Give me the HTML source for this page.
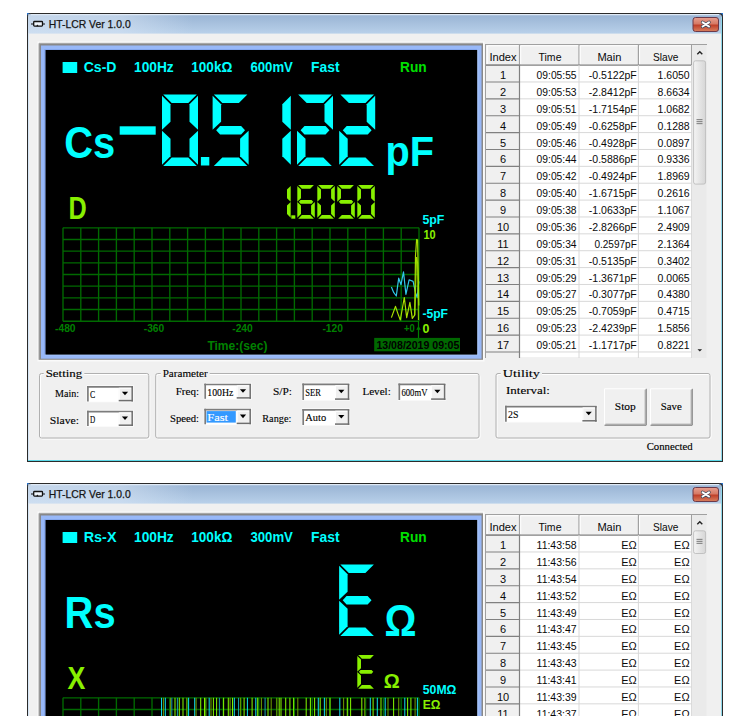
<!DOCTYPE html><html><head><meta charset="utf-8"><style>html,body{margin:0;padding:0;background:#fff;overflow:hidden}svg{display:block}</style></head><body>
<svg width="750" height="716" viewBox="0 0 750 716">
<defs><linearGradient id="tgrad" x1="0" y1="0" x2="0" y2="1"><stop offset="0" stop-color="#98b3d3"/><stop offset="1" stop-color="#b9d1ea"/></linearGradient><linearGradient id="cgrad" x1="0" y1="0" x2="0" y2="1"><stop offset="0" stop-color="#e8a090"/><stop offset="0.45" stop-color="#d67a66"/><stop offset="0.55" stop-color="#c0402a"/><stop offset="1" stop-color="#d88060"/></linearGradient><linearGradient id="thgrad" x1="0" y1="0" x2="1" y2="0"><stop offset="0" stop-color="#f4f4f4"/><stop offset="1" stop-color="#d6d6d6"/></linearGradient><linearGradient id="glow" x1="0" y1="0" x2="1" y2="0"><stop offset="0" stop-color="#d6e4f4" stop-opacity="0.7"/><stop offset="0.55" stop-color="#d6e4f4" stop-opacity="0.6"/><stop offset="1" stop-color="#d6e4f4" stop-opacity="0"/></linearGradient></defs>
<rect width="750" height="716" fill="#fff"/>
<g transform="translate(0,13)">
<rect x="27" y="0" width="3" height="3" fill="#2a78d8" />
<rect x="720" y="0" width="3" height="3" fill="#2a78d8" />
<path d="M27,449 V4 Q27,0 31,0 H719 Q723,0 723,4 V449 Z" fill="#2b2b2b"/>
<path d="M28,21 V4.5 Q28,1 31.5,1 H718.5 Q722,1 722,4.5 V21 Z" fill="url(#tgrad)"/>
<rect x="28" y="1" width="165" height="20" fill="url(#glow)" />
<line x1="31" y1="1.6" x2="719" y2="1.6" stroke="#dfe9f5" stroke-width="1.2" />
<rect x="28" y="20.6" width="694" height="427.4" fill="#f0f0f0" />
<line x1="28.5" y1="20.6" x2="28.5" y2="448" stroke="#d6e6f6" stroke-width="1" />
<line x1="721.5" y1="4" x2="721.5" y2="448" stroke="#8fd8ea" stroke-width="1" />
<line x1="28" y1="447.5" x2="722" y2="447.5" stroke="#5ad8e8" stroke-width="1" />
<rect x="33.7" y="8.5" width="8.8" height="4.6" rx="0.8" fill="#eef4fb" stroke="#111" stroke-width="1.3"/>
<path d="M31,11 H33.7 M42.5,11 H45" stroke="#111" stroke-width="1.2"/>
<path d="M36.2,13.2 L37.3,11.6 L38.6,13.2 Z" fill="#111"/>
<text x="48.7" y="15.1" font-family='"Liberation Sans", sans-serif' font-size="10.5" font-weight="normal" fill="#141414" text-anchor="start" textLength="82" lengthAdjust="spacingAndGlyphs" stroke="#141414" stroke-width="0.25">HT-LCR Ver 1.0.0</text>
<rect x="693" y="4.5" width="25.5" height="14" rx="2.5" fill="url(#cgrad)" stroke="#6b3a4a" stroke-width="1"/>
<path d="M702.6,9.3 L709,13.5 M709,9.3 L702.6,13.5" stroke="#3e4a5a" stroke-width="3.4" stroke-linecap="round"/>
<path d="M702.6,9.3 L709,13.5 M709,9.3 L702.6,13.5" stroke="#fff" stroke-width="2" stroke-linecap="round"/>
<rect x="37.5" y="28.5" width="447" height="320" fill="#fafafa" />
<rect x="39" y="30.3" width="444" height="316.5" fill="#888888" />
<path d="M39,346.8 V30.3 H483" fill="none" stroke="#a8a8a8" stroke-width="1"/>
<rect x="41" y="32.5" width="440.5" height="313.2" fill="#98b8f8" />
<path d="M44.5,341.5 V36.5 H477" fill="none" stroke="#86a8ee" stroke-width="1"/>
<path d="M45,341.7 H477.7 V37" fill="none" stroke="#b0ceff" stroke-width="1.2"/>
<rect x="45.5" y="37" width="431.7" height="304.6" fill="#000" />
<rect x="62.6" y="49" width="14.6" height="11" fill="#00ffff" />
<text x="83.7" y="58.8" font-family='"Liberation Sans", sans-serif' font-size="14" font-weight="bold" fill="#00ffff" text-anchor="start" textLength="32.8" lengthAdjust="spacingAndGlyphs" >Cs-D</text>
<text x="134" y="58.8" font-family='"Liberation Sans", sans-serif' font-size="14" font-weight="bold" fill="#00ffff" text-anchor="start" textLength="39.7" lengthAdjust="spacingAndGlyphs" >100Hz</text>
<text x="191.3" y="58.8" font-family='"Liberation Sans", sans-serif' font-size="14" font-weight="bold" fill="#00ffff" text-anchor="start" textLength="41" lengthAdjust="spacingAndGlyphs" >100kΩ</text>
<text x="250.4" y="58.8" font-family='"Liberation Sans", sans-serif' font-size="14" font-weight="bold" fill="#00ffff" text-anchor="start" textLength="42.5" lengthAdjust="spacingAndGlyphs" >600mV</text>
<text x="311" y="58.8" font-family='"Liberation Sans", sans-serif' font-size="14" font-weight="bold" fill="#00ffff" text-anchor="start" textLength="28.5" lengthAdjust="spacingAndGlyphs" >Fast</text>
<text x="400" y="58.8" font-family='"Liberation Sans", sans-serif' font-size="14" font-weight="bold" fill="#00e000" text-anchor="start" textLength="26.6" lengthAdjust="spacingAndGlyphs" >Run</text>
<text x="64.3" y="144.6" font-family='"Liberation Sans", sans-serif' font-size="43.5" font-weight="bold" fill="#00ffff" text-anchor="start" textLength="51" lengthAdjust="spacingAndGlyphs" >Cs</text>
<rect x="119.7" y="113.3" width="36" height="8.4" fill="#00ffff" />
<polygon points="163.20,81.50 196.80,81.50 188.30,90.00 171.70,90.00" fill="#00ffff"/>
<polygon points="198.00,82.70 198.00,116.74 189.50,108.75 189.50,91.20" fill="#00ffff"/>
<polygon points="198.00,117.76 198.00,151.80 189.50,143.30 189.50,125.75" fill="#00ffff"/>
<polygon points="163.20,153.00 196.80,153.00 188.30,144.50 171.70,144.50" fill="#00ffff"/>
<polygon points="162.00,117.76 170.50,125.75 170.50,143.30 162.00,151.80" fill="#00ffff"/>
<polygon points="162.00,82.70 170.50,91.20 170.50,108.75 162.00,116.74" fill="#00ffff"/>
<rect x="200.9" y="144" width="8.4" height="8.5" fill="#00ffff" />
<polygon points="213.80,81.50 247.40,81.50 238.90,90.00 222.30,90.00" fill="#00ffff"/>
<polygon points="212.60,82.70 221.10,91.20 221.10,108.75 212.60,116.74" fill="#00ffff"/>
<polygon points="216.17,117.25 220.08,113.00 241.12,113.00 245.03,117.25 241.12,121.50 220.08,121.50" fill="#00ffff"/>
<polygon points="248.60,117.76 248.60,151.80 240.10,143.30 240.10,125.75" fill="#00ffff"/>
<polygon points="213.80,153.00 247.40,153.00 238.90,144.50 222.30,144.50" fill="#00ffff"/>
<polygon points="290.80,82.70 290.80,116.74 282.30,108.75 282.30,91.20" fill="#00ffff"/>
<polygon points="290.80,117.76 290.80,151.80 282.30,143.30 282.30,125.75" fill="#00ffff"/>
<polygon points="298.20,81.50 331.80,81.50 323.30,90.00 306.70,90.00" fill="#00ffff"/>
<polygon points="333.00,82.70 333.00,116.74 324.50,108.75 324.50,91.20" fill="#00ffff"/>
<polygon points="300.57,117.25 304.48,113.00 325.52,113.00 329.43,117.25 325.52,121.50 304.48,121.50" fill="#00ffff"/>
<polygon points="297.00,117.76 305.50,125.75 305.50,143.30 297.00,151.80" fill="#00ffff"/>
<polygon points="298.20,153.00 331.80,153.00 323.30,144.50 306.70,144.50" fill="#00ffff"/>
<polygon points="340.40,81.50 374.00,81.50 365.50,90.00 348.90,90.00" fill="#00ffff"/>
<polygon points="375.20,82.70 375.20,116.74 366.70,108.75 366.70,91.20" fill="#00ffff"/>
<polygon points="342.77,117.25 346.68,113.00 367.72,113.00 371.63,117.25 367.72,121.50 346.68,121.50" fill="#00ffff"/>
<polygon points="339.20,117.76 347.70,125.75 347.70,143.30 339.20,151.80" fill="#00ffff"/>
<polygon points="340.40,153.00 374.00,153.00 365.50,144.50 348.90,144.50" fill="#00ffff"/>
<text x="385.5" y="153.4" font-family='"Liberation Sans", sans-serif' font-size="43" font-weight="bold" fill="#00ffff" text-anchor="start" textLength="48.5" lengthAdjust="spacingAndGlyphs" >pF</text>
<text x="68.5" y="205.8" font-family='"Liberation Sans", sans-serif' font-size="30.5" font-weight="bold" fill="#88f000" text-anchor="start" textLength="18.2" lengthAdjust="spacingAndGlyphs" >D</text>
<polygon points="290.70,172.90 290.70,188.63 287.00,185.15 287.00,176.60" fill="#88f000"/>
<polygon points="290.70,189.07 290.70,204.80 287.00,201.10 287.00,192.55" fill="#88f000"/>
<rect x="291.3" y="202.3" width="4" height="3.4" fill="#88f000" />
<polygon points="298.20,172.00 313.90,172.00 310.20,175.70 301.90,175.70" fill="#88f000"/>
<polygon points="297.30,172.90 301.00,176.60 301.00,185.15 297.30,188.63" fill="#88f000"/>
<polygon points="298.85,188.85 300.56,187.00 311.54,187.00 313.25,188.85 311.54,190.70 300.56,190.70" fill="#88f000"/>
<polygon points="297.30,189.07 301.00,192.55 301.00,201.10 297.30,204.80" fill="#88f000"/>
<polygon points="298.20,205.70 313.90,205.70 310.20,202.00 301.90,202.00" fill="#88f000"/>
<polygon points="314.80,189.07 314.80,204.80 311.10,201.10 311.10,192.55" fill="#88f000"/>
<polygon points="318.20,172.00 333.90,172.00 330.20,175.70 321.90,175.70" fill="#88f000"/>
<polygon points="334.80,172.90 334.80,188.63 331.10,185.15 331.10,176.60" fill="#88f000"/>
<polygon points="334.80,189.07 334.80,204.80 331.10,201.10 331.10,192.55" fill="#88f000"/>
<polygon points="318.20,205.70 333.90,205.70 330.20,202.00 321.90,202.00" fill="#88f000"/>
<polygon points="317.30,189.07 321.00,192.55 321.00,201.10 317.30,204.80" fill="#88f000"/>
<polygon points="317.30,172.90 321.00,176.60 321.00,185.15 317.30,188.63" fill="#88f000"/>
<polygon points="338.20,172.00 353.90,172.00 350.20,175.70 341.90,175.70" fill="#88f000"/>
<polygon points="337.30,172.90 341.00,176.60 341.00,185.15 337.30,188.63" fill="#88f000"/>
<polygon points="338.85,188.85 340.56,187.00 351.54,187.00 353.25,188.85 351.54,190.70 340.56,190.70" fill="#88f000"/>
<polygon points="354.80,189.07 354.80,204.80 351.10,201.10 351.10,192.55" fill="#88f000"/>
<polygon points="338.20,205.70 353.90,205.70 350.20,202.00 341.90,202.00" fill="#88f000"/>
<polygon points="358.20,172.00 373.90,172.00 370.20,175.70 361.90,175.70" fill="#88f000"/>
<polygon points="374.80,172.90 374.80,188.63 371.10,185.15 371.10,176.60" fill="#88f000"/>
<polygon points="374.80,189.07 374.80,204.80 371.10,201.10 371.10,192.55" fill="#88f000"/>
<polygon points="358.20,205.70 373.90,205.70 370.20,202.00 361.90,202.00" fill="#88f000"/>
<polygon points="357.30,189.07 361.00,192.55 361.00,201.10 357.30,204.80" fill="#88f000"/>
<polygon points="357.30,172.90 361.00,176.60 361.00,185.15 357.30,188.63" fill="#88f000"/>
<text x="422.4" y="211" font-family='"Liberation Sans", sans-serif' font-size="12" font-weight="bold" fill="#00ffff" text-anchor="start" textLength="22" lengthAdjust="spacingAndGlyphs" >5pF</text>
<text x="423.4" y="226" font-family='"Liberation Sans", sans-serif' font-size="12" font-weight="bold" fill="#88f000" text-anchor="start" textLength="12.2" lengthAdjust="spacingAndGlyphs" >10</text>
<text x="422.4" y="305" font-family='"Liberation Sans", sans-serif' font-size="12" font-weight="bold" fill="#00ffff" text-anchor="start" textLength="25.6" lengthAdjust="spacingAndGlyphs" >-5pF</text>
<text x="422.4" y="320" font-family='"Liberation Sans", sans-serif' font-size="12" font-weight="bold" fill="#88f000" text-anchor="start" textLength="6.9" lengthAdjust="spacingAndGlyphs" >0</text>
<line x1="63.0" y1="214.8" x2="63.0" y2="308.2" stroke="#006a00" stroke-width="1.35" />
<line x1="80.8" y1="214.8" x2="80.8" y2="308.2" stroke="#006a00" stroke-width="1.35" />
<line x1="98.6" y1="214.8" x2="98.6" y2="308.2" stroke="#006a00" stroke-width="1.35" />
<line x1="116.4" y1="214.8" x2="116.4" y2="308.2" stroke="#006a00" stroke-width="1.35" />
<line x1="134.2" y1="214.8" x2="134.2" y2="308.2" stroke="#006a00" stroke-width="1.35" />
<line x1="152.0" y1="214.8" x2="152.0" y2="308.2" stroke="#006a00" stroke-width="1.35" />
<line x1="169.8" y1="214.8" x2="169.8" y2="308.2" stroke="#006a00" stroke-width="1.35" />
<line x1="187.6" y1="214.8" x2="187.6" y2="308.2" stroke="#006a00" stroke-width="1.35" />
<line x1="205.4" y1="214.8" x2="205.4" y2="308.2" stroke="#006a00" stroke-width="1.35" />
<line x1="223.2" y1="214.8" x2="223.2" y2="308.2" stroke="#006a00" stroke-width="1.35" />
<line x1="241.0" y1="214.8" x2="241.0" y2="308.2" stroke="#006a00" stroke-width="1.35" />
<line x1="258.8" y1="214.8" x2="258.8" y2="308.2" stroke="#006a00" stroke-width="1.35" />
<line x1="276.6" y1="214.8" x2="276.6" y2="308.2" stroke="#006a00" stroke-width="1.35" />
<line x1="294.4" y1="214.8" x2="294.4" y2="308.2" stroke="#006a00" stroke-width="1.35" />
<line x1="312.2" y1="214.8" x2="312.2" y2="308.2" stroke="#006a00" stroke-width="1.35" />
<line x1="330.0" y1="214.8" x2="330.0" y2="308.2" stroke="#006a00" stroke-width="1.35" />
<line x1="347.8" y1="214.8" x2="347.8" y2="308.2" stroke="#006a00" stroke-width="1.35" />
<line x1="365.6" y1="214.8" x2="365.6" y2="308.2" stroke="#006a00" stroke-width="1.35" />
<line x1="383.4" y1="214.8" x2="383.4" y2="308.2" stroke="#006a00" stroke-width="1.35" />
<line x1="401.2" y1="214.8" x2="401.2" y2="308.2" stroke="#006a00" stroke-width="1.35" />
<line x1="419.0" y1="214.8" x2="419.0" y2="308.2" stroke="#006a00" stroke-width="1.35" />
<line x1="63" y1="214.8" x2="419" y2="214.8" stroke="#006a00" stroke-width="1.35" />
<line x1="63" y1="226.47500000000002" x2="419" y2="226.47500000000002" stroke="#006a00" stroke-width="1.35" />
<line x1="63" y1="238.15" x2="419" y2="238.15" stroke="#006a00" stroke-width="1.35" />
<line x1="63" y1="249.825" x2="419" y2="249.825" stroke="#006a00" stroke-width="1.35" />
<line x1="63" y1="261.5" x2="419" y2="261.5" stroke="#006a00" stroke-width="1.35" />
<line x1="63" y1="273.175" x2="419" y2="273.175" stroke="#006a00" stroke-width="1.35" />
<line x1="63" y1="284.85" x2="419" y2="284.85" stroke="#006a00" stroke-width="1.35" />
<line x1="63" y1="296.525" x2="419" y2="296.525" stroke="#006a00" stroke-width="1.35" />
<line x1="63" y1="308.2" x2="419" y2="308.2" stroke="#006a00" stroke-width="1.35" />
<text x="65.3" y="318.9" font-family='"Liberation Sans", sans-serif' font-size="10.8" font-weight="bold" fill="#008000" text-anchor="middle" textLength="20.5" lengthAdjust="spacingAndGlyphs" >-480</text>
<text x="154" y="318.9" font-family='"Liberation Sans", sans-serif' font-size="10.8" font-weight="bold" fill="#008000" text-anchor="middle" textLength="20.5" lengthAdjust="spacingAndGlyphs" >-360</text>
<text x="242.5" y="318.9" font-family='"Liberation Sans", sans-serif' font-size="10.8" font-weight="bold" fill="#008000" text-anchor="middle" textLength="20.5" lengthAdjust="spacingAndGlyphs" >-240</text>
<text x="332.7" y="318.9" font-family='"Liberation Sans", sans-serif' font-size="10.8" font-weight="bold" fill="#008000" text-anchor="middle" textLength="20.5" lengthAdjust="spacingAndGlyphs" >-120</text>
<text x="207.4" y="336.5" font-family='"Liberation Sans", sans-serif' font-size="12.3" font-weight="bold" fill="#008000" text-anchor="start" textLength="60" lengthAdjust="spacingAndGlyphs" >Time:(sec)</text>
<polyline points="391.4,274 393.8,279.7 396.3,283 398.7,265.2 401,271.7 403.5,258.8 405.9,281.3 409.1,266.8 413.1,268.4 415.5,279.7 417.2,284.5 418.8,268.4" fill="none" stroke="#30c8e8" stroke-width="1.2" stroke-linejoin="round"/>
<polyline points="391.4,304.6 395.5,293.4 397.9,300.6 400.3,307 404.3,284.5 406.7,304.6 409.9,289.3 412.3,305.4 414.7,302.2 415.5,242.7 416.6,226.6 417.6,227 418.8,292.6" fill="none" stroke="#a8e000" stroke-width="1.2" stroke-linejoin="round"/>
<polyline points="414.8,302 416.6,244 417.6,250 418.4,307" fill="none" stroke="#a0e000" stroke-width="1" transform="translate(0,0)"/>
<line x1="418.5" y1="308" x2="418.5" y2="332" stroke="#008000" stroke-width="1.2" />
<path d="M416.3,316.8 L418.5,312.8 L420.7,316.8 Z" fill="#008000"/>
<text x="404" y="318.7" font-family='"Liberation Sans", sans-serif' font-size="10.8" font-weight="bold" fill="#008000" text-anchor="start" textLength="10.7" lengthAdjust="spacingAndGlyphs" >+0</text>
<rect x="374.2" y="324.9" width="85.8" height="13.4" fill="#006800" />
<text x="376.4" y="335.5" font-family='"Liberation Sans", sans-serif' font-size="11" font-weight="bold" fill="#000" text-anchor="start" textLength="83" lengthAdjust="spacingAndGlyphs" >13/08/2019  09:05</text>
<rect x="485" y="31" width="222" height="314" fill="#f0f0f0" />
<rect x="485" y="31" width="222" height="1" fill="#a0a0a0" />
<rect x="485" y="31" width="1" height="314" fill="#a0a0a0" />
<rect x="486" y="32" width="205.6" height="20" fill="#f0f0f0" />
<rect x="519.5" y="52.1" width="172.1" height="292" fill="#fff" />
<line x1="486" y1="52.1" x2="519.5" y2="52.1" stroke="#808080" stroke-width="1.2" />
<line x1="519.5" y1="52.1" x2="691.6" y2="52.1" stroke="#d8d8d8" stroke-width="1" />
<line x1="486" y1="68.975" x2="519.5" y2="68.975" stroke="#808080" stroke-width="1.2" />
<line x1="519.5" y1="68.975" x2="691.6" y2="68.975" stroke="#d8d8d8" stroke-width="1" />
<line x1="486" y1="85.85" x2="519.5" y2="85.85" stroke="#808080" stroke-width="1.2" />
<line x1="519.5" y1="85.85" x2="691.6" y2="85.85" stroke="#d8d8d8" stroke-width="1" />
<line x1="486" y1="102.725" x2="519.5" y2="102.725" stroke="#808080" stroke-width="1.2" />
<line x1="519.5" y1="102.725" x2="691.6" y2="102.725" stroke="#d8d8d8" stroke-width="1" />
<line x1="486" y1="119.6" x2="519.5" y2="119.6" stroke="#808080" stroke-width="1.2" />
<line x1="519.5" y1="119.6" x2="691.6" y2="119.6" stroke="#d8d8d8" stroke-width="1" />
<line x1="486" y1="136.475" x2="519.5" y2="136.475" stroke="#808080" stroke-width="1.2" />
<line x1="519.5" y1="136.475" x2="691.6" y2="136.475" stroke="#d8d8d8" stroke-width="1" />
<line x1="486" y1="153.35" x2="519.5" y2="153.35" stroke="#808080" stroke-width="1.2" />
<line x1="519.5" y1="153.35" x2="691.6" y2="153.35" stroke="#d8d8d8" stroke-width="1" />
<line x1="486" y1="170.225" x2="519.5" y2="170.225" stroke="#808080" stroke-width="1.2" />
<line x1="519.5" y1="170.225" x2="691.6" y2="170.225" stroke="#d8d8d8" stroke-width="1" />
<line x1="486" y1="187.1" x2="519.5" y2="187.1" stroke="#808080" stroke-width="1.2" />
<line x1="519.5" y1="187.1" x2="691.6" y2="187.1" stroke="#d8d8d8" stroke-width="1" />
<line x1="486" y1="203.975" x2="519.5" y2="203.975" stroke="#808080" stroke-width="1.2" />
<line x1="519.5" y1="203.975" x2="691.6" y2="203.975" stroke="#d8d8d8" stroke-width="1" />
<line x1="486" y1="220.85" x2="519.5" y2="220.85" stroke="#808080" stroke-width="1.2" />
<line x1="519.5" y1="220.85" x2="691.6" y2="220.85" stroke="#d8d8d8" stroke-width="1" />
<line x1="486" y1="237.725" x2="519.5" y2="237.725" stroke="#808080" stroke-width="1.2" />
<line x1="519.5" y1="237.725" x2="691.6" y2="237.725" stroke="#d8d8d8" stroke-width="1" />
<line x1="486" y1="254.6" x2="519.5" y2="254.6" stroke="#808080" stroke-width="1.2" />
<line x1="519.5" y1="254.6" x2="691.6" y2="254.6" stroke="#d8d8d8" stroke-width="1" />
<line x1="486" y1="271.475" x2="519.5" y2="271.475" stroke="#808080" stroke-width="1.2" />
<line x1="519.5" y1="271.475" x2="691.6" y2="271.475" stroke="#d8d8d8" stroke-width="1" />
<line x1="486" y1="288.35" x2="519.5" y2="288.35" stroke="#808080" stroke-width="1.2" />
<line x1="519.5" y1="288.35" x2="691.6" y2="288.35" stroke="#d8d8d8" stroke-width="1" />
<line x1="486" y1="305.225" x2="519.5" y2="305.225" stroke="#808080" stroke-width="1.2" />
<line x1="519.5" y1="305.225" x2="691.6" y2="305.225" stroke="#d8d8d8" stroke-width="1" />
<line x1="486" y1="322.1" x2="519.5" y2="322.1" stroke="#808080" stroke-width="1.2" />
<line x1="519.5" y1="322.1" x2="691.6" y2="322.1" stroke="#d8d8d8" stroke-width="1" />
<line x1="486" y1="338.975" x2="519.5" y2="338.975" stroke="#808080" stroke-width="1.2" />
<line x1="519.5" y1="338.975" x2="691.6" y2="338.975" stroke="#d8d8d8" stroke-width="1" />
<line x1="519.5" y1="32" x2="519.5" y2="52.1" stroke="#a0a0a0" stroke-width="1.2" />
<line x1="579" y1="32" x2="579" y2="52.1" stroke="#a0a0a0" stroke-width="1.2" />
<line x1="638.4" y1="32" x2="638.4" y2="52.1" stroke="#a0a0a0" stroke-width="1.2" />
<line x1="691.6" y1="32" x2="691.6" y2="52.1" stroke="#a0a0a0" stroke-width="1.2" />
<path d="M487.2,51 V32.8 H518.7" fill="none" stroke="#fff" stroke-width="1"/>
<path d="M520.7,51 V32.8 H578.2" fill="none" stroke="#fff" stroke-width="1"/>
<path d="M580.2,51 V32.8 H637.6" fill="none" stroke="#fff" stroke-width="1"/>
<path d="M639.6,51 V32.8 H690.8000000000001" fill="none" stroke="#fff" stroke-width="1"/>
<line x1="486" y1="52.1" x2="691.6" y2="52.1" stroke="#8a8a8a" stroke-width="1.3" />
<line x1="519.5" y1="52" x2="519.5" y2="345" stroke="#808080" stroke-width="1.2" />
<line x1="579" y1="52" x2="579" y2="345" stroke="#d8d8d8" stroke-width="1" />
<line x1="638.4" y1="52" x2="638.4" y2="345" stroke="#d8d8d8" stroke-width="1" />
<line x1="691.6" y1="52" x2="691.6" y2="345" stroke="#d8d8d8" stroke-width="1" />
<text x="503" y="48.2" font-family='"Liberation Sans", sans-serif' font-size="11" font-weight="normal" fill="#0a0a0a" text-anchor="middle" textLength="27.2" lengthAdjust="spacingAndGlyphs" >Index</text>
<text x="550" y="48.2" font-family='"Liberation Sans", sans-serif' font-size="11" font-weight="normal" fill="#0a0a0a" text-anchor="middle" textLength="23" lengthAdjust="spacingAndGlyphs" >Time</text>
<text x="609.4" y="48.2" font-family='"Liberation Sans", sans-serif' font-size="11" font-weight="normal" fill="#0a0a0a" text-anchor="middle" textLength="24" lengthAdjust="spacingAndGlyphs" >Main</text>
<text x="665.7" y="48.2" font-family='"Liberation Sans", sans-serif' font-size="11" font-weight="normal" fill="#0a0a0a" text-anchor="middle" textLength="25.4" lengthAdjust="spacingAndGlyphs" >Slave</text>
<text x="503" y="66.1" font-family='"Liberation Sans", sans-serif' font-size="11" font-weight="normal" fill="#0a0a0a" text-anchor="middle" >1</text>
<text x="576.6" y="66.1" font-family='"Liberation Sans", sans-serif' font-size="11" font-weight="normal" fill="#0a0a0a" text-anchor="end" textLength="40" lengthAdjust="spacingAndGlyphs" >09:05:55</text>
<text x="636.8" y="66.1" font-family='"Liberation Sans", sans-serif' font-size="11" font-weight="normal" fill="#0a0a0a" text-anchor="end" textLength="48" lengthAdjust="spacingAndGlyphs" >-0.5122pF</text>
<text x="689.6" y="66.1" font-family='"Liberation Sans", sans-serif' font-size="11" font-weight="normal" fill="#0a0a0a" text-anchor="end" textLength="32" lengthAdjust="spacingAndGlyphs" >1.6050</text>
<text x="503" y="82.975" font-family='"Liberation Sans", sans-serif' font-size="11" font-weight="normal" fill="#0a0a0a" text-anchor="middle" >2</text>
<text x="576.6" y="82.975" font-family='"Liberation Sans", sans-serif' font-size="11" font-weight="normal" fill="#0a0a0a" text-anchor="end" textLength="40" lengthAdjust="spacingAndGlyphs" >09:05:53</text>
<text x="636.8" y="82.975" font-family='"Liberation Sans", sans-serif' font-size="11" font-weight="normal" fill="#0a0a0a" text-anchor="end" textLength="48" lengthAdjust="spacingAndGlyphs" >-2.8412pF</text>
<text x="689.6" y="82.975" font-family='"Liberation Sans", sans-serif' font-size="11" font-weight="normal" fill="#0a0a0a" text-anchor="end" textLength="32" lengthAdjust="spacingAndGlyphs" >8.6634</text>
<text x="503" y="99.85" font-family='"Liberation Sans", sans-serif' font-size="11" font-weight="normal" fill="#0a0a0a" text-anchor="middle" >3</text>
<text x="576.6" y="99.85" font-family='"Liberation Sans", sans-serif' font-size="11" font-weight="normal" fill="#0a0a0a" text-anchor="end" textLength="40" lengthAdjust="spacingAndGlyphs" >09:05:51</text>
<text x="636.8" y="99.85" font-family='"Liberation Sans", sans-serif' font-size="11" font-weight="normal" fill="#0a0a0a" text-anchor="end" textLength="48" lengthAdjust="spacingAndGlyphs" >-1.7154pF</text>
<text x="689.6" y="99.85" font-family='"Liberation Sans", sans-serif' font-size="11" font-weight="normal" fill="#0a0a0a" text-anchor="end" textLength="32" lengthAdjust="spacingAndGlyphs" >1.0682</text>
<text x="503" y="116.725" font-family='"Liberation Sans", sans-serif' font-size="11" font-weight="normal" fill="#0a0a0a" text-anchor="middle" >4</text>
<text x="576.6" y="116.725" font-family='"Liberation Sans", sans-serif' font-size="11" font-weight="normal" fill="#0a0a0a" text-anchor="end" textLength="40" lengthAdjust="spacingAndGlyphs" >09:05:49</text>
<text x="636.8" y="116.725" font-family='"Liberation Sans", sans-serif' font-size="11" font-weight="normal" fill="#0a0a0a" text-anchor="end" textLength="48" lengthAdjust="spacingAndGlyphs" >-0.6258pF</text>
<text x="689.6" y="116.725" font-family='"Liberation Sans", sans-serif' font-size="11" font-weight="normal" fill="#0a0a0a" text-anchor="end" textLength="32" lengthAdjust="spacingAndGlyphs" >0.1288</text>
<text x="503" y="133.6" font-family='"Liberation Sans", sans-serif' font-size="11" font-weight="normal" fill="#0a0a0a" text-anchor="middle" >5</text>
<text x="576.6" y="133.6" font-family='"Liberation Sans", sans-serif' font-size="11" font-weight="normal" fill="#0a0a0a" text-anchor="end" textLength="40" lengthAdjust="spacingAndGlyphs" >09:05:46</text>
<text x="636.8" y="133.6" font-family='"Liberation Sans", sans-serif' font-size="11" font-weight="normal" fill="#0a0a0a" text-anchor="end" textLength="48" lengthAdjust="spacingAndGlyphs" >-0.4928pF</text>
<text x="689.6" y="133.6" font-family='"Liberation Sans", sans-serif' font-size="11" font-weight="normal" fill="#0a0a0a" text-anchor="end" textLength="32" lengthAdjust="spacingAndGlyphs" >0.0897</text>
<text x="503" y="150.475" font-family='"Liberation Sans", sans-serif' font-size="11" font-weight="normal" fill="#0a0a0a" text-anchor="middle" >6</text>
<text x="576.6" y="150.475" font-family='"Liberation Sans", sans-serif' font-size="11" font-weight="normal" fill="#0a0a0a" text-anchor="end" textLength="40" lengthAdjust="spacingAndGlyphs" >09:05:44</text>
<text x="636.8" y="150.475" font-family='"Liberation Sans", sans-serif' font-size="11" font-weight="normal" fill="#0a0a0a" text-anchor="end" textLength="48" lengthAdjust="spacingAndGlyphs" >-0.5886pF</text>
<text x="689.6" y="150.475" font-family='"Liberation Sans", sans-serif' font-size="11" font-weight="normal" fill="#0a0a0a" text-anchor="end" textLength="32" lengthAdjust="spacingAndGlyphs" >0.9336</text>
<text x="503" y="167.35" font-family='"Liberation Sans", sans-serif' font-size="11" font-weight="normal" fill="#0a0a0a" text-anchor="middle" >7</text>
<text x="576.6" y="167.35" font-family='"Liberation Sans", sans-serif' font-size="11" font-weight="normal" fill="#0a0a0a" text-anchor="end" textLength="40" lengthAdjust="spacingAndGlyphs" >09:05:42</text>
<text x="636.8" y="167.35" font-family='"Liberation Sans", sans-serif' font-size="11" font-weight="normal" fill="#0a0a0a" text-anchor="end" textLength="48" lengthAdjust="spacingAndGlyphs" >-0.4924pF</text>
<text x="689.6" y="167.35" font-family='"Liberation Sans", sans-serif' font-size="11" font-weight="normal" fill="#0a0a0a" text-anchor="end" textLength="32" lengthAdjust="spacingAndGlyphs" >1.8969</text>
<text x="503" y="184.225" font-family='"Liberation Sans", sans-serif' font-size="11" font-weight="normal" fill="#0a0a0a" text-anchor="middle" >8</text>
<text x="576.6" y="184.225" font-family='"Liberation Sans", sans-serif' font-size="11" font-weight="normal" fill="#0a0a0a" text-anchor="end" textLength="40" lengthAdjust="spacingAndGlyphs" >09:05:40</text>
<text x="636.8" y="184.225" font-family='"Liberation Sans", sans-serif' font-size="11" font-weight="normal" fill="#0a0a0a" text-anchor="end" textLength="48" lengthAdjust="spacingAndGlyphs" >-1.6715pF</text>
<text x="689.6" y="184.225" font-family='"Liberation Sans", sans-serif' font-size="11" font-weight="normal" fill="#0a0a0a" text-anchor="end" textLength="32" lengthAdjust="spacingAndGlyphs" >0.2616</text>
<text x="503" y="201.1" font-family='"Liberation Sans", sans-serif' font-size="11" font-weight="normal" fill="#0a0a0a" text-anchor="middle" >9</text>
<text x="576.6" y="201.1" font-family='"Liberation Sans", sans-serif' font-size="11" font-weight="normal" fill="#0a0a0a" text-anchor="end" textLength="40" lengthAdjust="spacingAndGlyphs" >09:05:38</text>
<text x="636.8" y="201.1" font-family='"Liberation Sans", sans-serif' font-size="11" font-weight="normal" fill="#0a0a0a" text-anchor="end" textLength="48" lengthAdjust="spacingAndGlyphs" >-1.0633pF</text>
<text x="689.6" y="201.1" font-family='"Liberation Sans", sans-serif' font-size="11" font-weight="normal" fill="#0a0a0a" text-anchor="end" textLength="32" lengthAdjust="spacingAndGlyphs" >1.1067</text>
<text x="503" y="217.975" font-family='"Liberation Sans", sans-serif' font-size="11" font-weight="normal" fill="#0a0a0a" text-anchor="middle" >10</text>
<text x="576.6" y="217.975" font-family='"Liberation Sans", sans-serif' font-size="11" font-weight="normal" fill="#0a0a0a" text-anchor="end" textLength="40" lengthAdjust="spacingAndGlyphs" >09:05:36</text>
<text x="636.8" y="217.975" font-family='"Liberation Sans", sans-serif' font-size="11" font-weight="normal" fill="#0a0a0a" text-anchor="end" textLength="48" lengthAdjust="spacingAndGlyphs" >-2.8266pF</text>
<text x="689.6" y="217.975" font-family='"Liberation Sans", sans-serif' font-size="11" font-weight="normal" fill="#0a0a0a" text-anchor="end" textLength="32" lengthAdjust="spacingAndGlyphs" >2.4909</text>
<text x="503" y="234.85" font-family='"Liberation Sans", sans-serif' font-size="11" font-weight="normal" fill="#0a0a0a" text-anchor="middle" >11</text>
<text x="576.6" y="234.85" font-family='"Liberation Sans", sans-serif' font-size="11" font-weight="normal" fill="#0a0a0a" text-anchor="end" textLength="40" lengthAdjust="spacingAndGlyphs" >09:05:34</text>
<text x="636.8" y="234.85" font-family='"Liberation Sans", sans-serif' font-size="11" font-weight="normal" fill="#0a0a0a" text-anchor="end" textLength="42.4" lengthAdjust="spacingAndGlyphs" >0.2597pF</text>
<text x="689.6" y="234.85" font-family='"Liberation Sans", sans-serif' font-size="11" font-weight="normal" fill="#0a0a0a" text-anchor="end" textLength="32" lengthAdjust="spacingAndGlyphs" >2.1364</text>
<text x="503" y="251.725" font-family='"Liberation Sans", sans-serif' font-size="11" font-weight="normal" fill="#0a0a0a" text-anchor="middle" >12</text>
<text x="576.6" y="251.725" font-family='"Liberation Sans", sans-serif' font-size="11" font-weight="normal" fill="#0a0a0a" text-anchor="end" textLength="40" lengthAdjust="spacingAndGlyphs" >09:05:31</text>
<text x="636.8" y="251.725" font-family='"Liberation Sans", sans-serif' font-size="11" font-weight="normal" fill="#0a0a0a" text-anchor="end" textLength="48" lengthAdjust="spacingAndGlyphs" >-0.5135pF</text>
<text x="689.6" y="251.725" font-family='"Liberation Sans", sans-serif' font-size="11" font-weight="normal" fill="#0a0a0a" text-anchor="end" textLength="32" lengthAdjust="spacingAndGlyphs" >0.3402</text>
<text x="503" y="268.6" font-family='"Liberation Sans", sans-serif' font-size="11" font-weight="normal" fill="#0a0a0a" text-anchor="middle" >13</text>
<text x="576.6" y="268.6" font-family='"Liberation Sans", sans-serif' font-size="11" font-weight="normal" fill="#0a0a0a" text-anchor="end" textLength="40" lengthAdjust="spacingAndGlyphs" >09:05:29</text>
<text x="636.8" y="268.6" font-family='"Liberation Sans", sans-serif' font-size="11" font-weight="normal" fill="#0a0a0a" text-anchor="end" textLength="48" lengthAdjust="spacingAndGlyphs" >-1.3671pF</text>
<text x="689.6" y="268.6" font-family='"Liberation Sans", sans-serif' font-size="11" font-weight="normal" fill="#0a0a0a" text-anchor="end" textLength="32" lengthAdjust="spacingAndGlyphs" >0.0065</text>
<text x="503" y="285.475" font-family='"Liberation Sans", sans-serif' font-size="11" font-weight="normal" fill="#0a0a0a" text-anchor="middle" >14</text>
<text x="576.6" y="285.475" font-family='"Liberation Sans", sans-serif' font-size="11" font-weight="normal" fill="#0a0a0a" text-anchor="end" textLength="40" lengthAdjust="spacingAndGlyphs" >09:05:27</text>
<text x="636.8" y="285.475" font-family='"Liberation Sans", sans-serif' font-size="11" font-weight="normal" fill="#0a0a0a" text-anchor="end" textLength="48" lengthAdjust="spacingAndGlyphs" >-0.3077pF</text>
<text x="689.6" y="285.475" font-family='"Liberation Sans", sans-serif' font-size="11" font-weight="normal" fill="#0a0a0a" text-anchor="end" textLength="32" lengthAdjust="spacingAndGlyphs" >0.4380</text>
<text x="503" y="302.35" font-family='"Liberation Sans", sans-serif' font-size="11" font-weight="normal" fill="#0a0a0a" text-anchor="middle" >15</text>
<text x="576.6" y="302.35" font-family='"Liberation Sans", sans-serif' font-size="11" font-weight="normal" fill="#0a0a0a" text-anchor="end" textLength="40" lengthAdjust="spacingAndGlyphs" >09:05:25</text>
<text x="636.8" y="302.35" font-family='"Liberation Sans", sans-serif' font-size="11" font-weight="normal" fill="#0a0a0a" text-anchor="end" textLength="48" lengthAdjust="spacingAndGlyphs" >-0.7059pF</text>
<text x="689.6" y="302.35" font-family='"Liberation Sans", sans-serif' font-size="11" font-weight="normal" fill="#0a0a0a" text-anchor="end" textLength="32" lengthAdjust="spacingAndGlyphs" >0.4715</text>
<text x="503" y="319.225" font-family='"Liberation Sans", sans-serif' font-size="11" font-weight="normal" fill="#0a0a0a" text-anchor="middle" >16</text>
<text x="576.6" y="319.225" font-family='"Liberation Sans", sans-serif' font-size="11" font-weight="normal" fill="#0a0a0a" text-anchor="end" textLength="40" lengthAdjust="spacingAndGlyphs" >09:05:23</text>
<text x="636.8" y="319.225" font-family='"Liberation Sans", sans-serif' font-size="11" font-weight="normal" fill="#0a0a0a" text-anchor="end" textLength="48" lengthAdjust="spacingAndGlyphs" >-2.4239pF</text>
<text x="689.6" y="319.225" font-family='"Liberation Sans", sans-serif' font-size="11" font-weight="normal" fill="#0a0a0a" text-anchor="end" textLength="32" lengthAdjust="spacingAndGlyphs" >1.5856</text>
<text x="503" y="336.1" font-family='"Liberation Sans", sans-serif' font-size="11" font-weight="normal" fill="#0a0a0a" text-anchor="middle" >17</text>
<text x="576.6" y="336.1" font-family='"Liberation Sans", sans-serif' font-size="11" font-weight="normal" fill="#0a0a0a" text-anchor="end" textLength="40" lengthAdjust="spacingAndGlyphs" >09:05:21</text>
<text x="636.8" y="336.1" font-family='"Liberation Sans", sans-serif' font-size="11" font-weight="normal" fill="#0a0a0a" text-anchor="end" textLength="48" lengthAdjust="spacingAndGlyphs" >-1.1717pF</text>
<text x="689.6" y="336.1" font-family='"Liberation Sans", sans-serif' font-size="11" font-weight="normal" fill="#0a0a0a" text-anchor="end" textLength="32" lengthAdjust="spacingAndGlyphs" >0.8221</text>
<rect x="692" y="32" width="14.5" height="313" fill="#eaeaea" />
<path d="M697.3,41.3 L699.8,38.8 L702.3,41.3" fill="none" stroke="#222" stroke-width="1.4"/>
<rect x="693.6" y="47.8" width="12" height="123.3" rx="2" fill="url(#thgrad)" stroke="#b8b8b8" stroke-width="0.8"/>
<line x1="696.5" y1="106.65" x2="702.5" y2="106.65" stroke="#606060" stroke-width="0.8" />
<line x1="696.5" y1="108.65" x2="702.5" y2="108.65" stroke="#606060" stroke-width="0.8" />
<line x1="696.5" y1="110.65" x2="702.5" y2="110.65" stroke="#606060" stroke-width="0.8" />
<path d="M697.5,336.2 L699.8,338.6 L702.1,336.2 Z" fill="#222"/>
<rect x="40.5" y="361.5" width="109.30000000000001" height="64.5" rx="2" fill="none" stroke="#fff" stroke-width="1"/>
<rect x="39.5" y="360.5" width="109.30000000000001" height="64.5" rx="2" fill="none" stroke="#b0b0b0" stroke-width="1"/>
<rect x="43.7" y="356.5" width="40.6" height="8" fill="#f0f0f0" />
<text x="45.7" y="363.8" font-family='"Liberation Serif", serif' font-size="9.7" font-weight="normal" fill="#000" text-anchor="start" textLength="36.6" lengthAdjust="spacingAndGlyphs"  stroke="#000" stroke-width="0.12">Setting</text>
<text x="55" y="384" font-family='"Liberation Serif", serif' font-size="9.7" font-weight="normal" fill="#000" text-anchor="start" textLength="24" lengthAdjust="spacingAndGlyphs"  stroke="#000" stroke-width="0.12">Main:</text>
<rect x="86.5" y="372.2" width="47.3" height="17.1" fill="#fbfbfb" />
<rect x="87" y="373" width="46" height="15.5" fill="#fff" />
<line x1="87" y1="373.9" x2="133" y2="373.9" stroke="#7c7c7c" stroke-width="1.7" />
<line x1="87.9" y1="373" x2="87.9" y2="388.5" stroke="#7c7c7c" stroke-width="1.7" />
<rect x="118.7" y="374.8" width="13" height="12.9" fill="#f0f0f0" />
<line x1="119.2" y1="375.3" x2="131.2" y2="375.3" stroke="#fff" stroke-width="1" />
<line x1="119.2" y1="375.3" x2="119.2" y2="387.0" stroke="#fff" stroke-width="1" />
<line x1="118.7" y1="387.6" x2="133" y2="387.6" stroke="#6e6e6e" stroke-width="1.5" />
<line x1="132.2" y1="373.5" x2="132.2" y2="388.5" stroke="#6e6e6e" stroke-width="1.5" />
<path d="M121.9,378.75 L128.1,378.75 L125.0,382.35 Z" fill="#000"/>
<text x="90" y="385.2" font-family='"Liberation Serif", serif' font-size="9.7" font-weight="normal" fill="#000" text-anchor="start" textLength="5.2" lengthAdjust="spacingAndGlyphs"  stroke="#000" stroke-width="0.12">C</text>
<text x="49.7" y="411" font-family='"Liberation Serif", serif' font-size="9.7" font-weight="normal" fill="#000" text-anchor="start" textLength="29.3" lengthAdjust="spacingAndGlyphs"  stroke="#000" stroke-width="0.12">Slave:</text>
<rect x="86.5" y="396.9" width="47.3" height="17.0" fill="#fbfbfb" />
<rect x="87" y="397.7" width="46" height="15.4" fill="#fff" />
<line x1="87" y1="398.59999999999997" x2="133" y2="398.59999999999997" stroke="#7c7c7c" stroke-width="1.7" />
<line x1="87.9" y1="397.7" x2="87.9" y2="413.09999999999997" stroke="#7c7c7c" stroke-width="1.7" />
<rect x="118.7" y="399.5" width="13" height="12.8" fill="#f0f0f0" />
<line x1="119.2" y1="400.0" x2="131.2" y2="400.0" stroke="#fff" stroke-width="1" />
<line x1="119.2" y1="400.0" x2="119.2" y2="411.59999999999997" stroke="#fff" stroke-width="1" />
<line x1="118.7" y1="412.2" x2="133" y2="412.2" stroke="#6e6e6e" stroke-width="1.5" />
<line x1="132.2" y1="398.2" x2="132.2" y2="413.09999999999997" stroke="#6e6e6e" stroke-width="1.5" />
<path d="M121.9,403.4 L128.1,403.4 L125.0,407.0 Z" fill="#000"/>
<text x="90" y="409.9" font-family='"Liberation Serif", serif' font-size="9.7" font-weight="normal" fill="#000" text-anchor="start" textLength="5.2" lengthAdjust="spacingAndGlyphs"  stroke="#000" stroke-width="0.12">D</text>
<rect x="156.7" y="361.5" width="323.3" height="64.5" rx="2" fill="none" stroke="#fff" stroke-width="1"/>
<rect x="155.7" y="360.5" width="323.3" height="64.5" rx="2" fill="none" stroke="#b0b0b0" stroke-width="1"/>
<rect x="160.7" y="356.5" width="49" height="8" fill="#f0f0f0" />
<text x="162.7" y="363.8" font-family='"Liberation Serif", serif' font-size="9.7" font-weight="normal" fill="#000" text-anchor="start" textLength="45" lengthAdjust="spacingAndGlyphs"  stroke="#000" stroke-width="0.12">Parameter</text>
<text x="175.7" y="382" font-family='"Liberation Serif", serif' font-size="9.7" font-weight="normal" fill="#000" text-anchor="start" textLength="23.3" lengthAdjust="spacingAndGlyphs"  stroke="#000" stroke-width="0.12">Freq:</text>
<rect x="203.8" y="369.8" width="48.0" height="16.8" fill="#fbfbfb" />
<rect x="204.3" y="370.6" width="46.7" height="15.2" fill="#fff" />
<line x1="204.3" y1="371.5" x2="251.0" y2="371.5" stroke="#7c7c7c" stroke-width="1.7" />
<line x1="205.20000000000002" y1="370.6" x2="205.20000000000002" y2="385.8" stroke="#7c7c7c" stroke-width="1.7" />
<rect x="236.7" y="372.40000000000003" width="13" height="12.6" fill="#f0f0f0" />
<line x1="237.2" y1="372.90000000000003" x2="249.2" y2="372.90000000000003" stroke="#fff" stroke-width="1" />
<line x1="237.2" y1="372.90000000000003" x2="237.2" y2="384.3" stroke="#fff" stroke-width="1" />
<line x1="236.7" y1="384.90000000000003" x2="251.0" y2="384.90000000000003" stroke="#6e6e6e" stroke-width="1.5" />
<line x1="250.2" y1="371.1" x2="250.2" y2="385.8" stroke="#6e6e6e" stroke-width="1.5" />
<path d="M239.9,376.20000000000005 L246.1,376.20000000000005 L243.0,379.80000000000007 Z" fill="#000"/>
<text x="207.3" y="382.8" font-family='"Liberation Serif", serif' font-size="9.7" font-weight="normal" fill="#000" text-anchor="start" textLength="26.0" lengthAdjust="spacingAndGlyphs"  stroke="#000" stroke-width="0.12">100Hz</text>
<text x="170" y="409" font-family='"Liberation Serif", serif' font-size="9.7" font-weight="normal" fill="#000" text-anchor="start" textLength="29" lengthAdjust="spacingAndGlyphs"  stroke="#000" stroke-width="0.12">Speed:</text>
<rect x="203.8" y="395.0" width="48.0" height="17.1" fill="#fbfbfb" />
<rect x="204.3" y="395.8" width="46.7" height="15.5" fill="#fff" />
<line x1="204.3" y1="396.7" x2="251.0" y2="396.7" stroke="#7c7c7c" stroke-width="1.7" />
<line x1="205.20000000000002" y1="395.8" x2="205.20000000000002" y2="411.3" stroke="#7c7c7c" stroke-width="1.7" />
<rect x="236.7" y="397.6" width="13" height="12.9" fill="#f0f0f0" />
<line x1="237.2" y1="398.1" x2="249.2" y2="398.1" stroke="#fff" stroke-width="1" />
<line x1="237.2" y1="398.1" x2="237.2" y2="409.8" stroke="#fff" stroke-width="1" />
<line x1="236.7" y1="410.40000000000003" x2="251.0" y2="410.40000000000003" stroke="#6e6e6e" stroke-width="1.5" />
<line x1="250.2" y1="396.3" x2="250.2" y2="411.3" stroke="#6e6e6e" stroke-width="1.5" />
<path d="M239.9,401.55 L246.1,401.55 L243.0,405.15000000000003 Z" fill="#000"/>
<rect x="206.5" y="398.1" width="29.3" height="11.5" fill="#3399ff" />
<text x="207.3" y="408.0" font-family='"Liberation Serif", serif' font-size="9.7" font-weight="normal" fill="#fff" text-anchor="start" textLength="20.8" lengthAdjust="spacingAndGlyphs"  stroke="#fff" stroke-width="0.12">Fast</text>
<text x="262.3" y="409" font-family='"Liberation Serif", serif' font-size="9.7" font-weight="normal" fill="#000" text-anchor="start" textLength="29" lengthAdjust="spacingAndGlyphs"  stroke="#000" stroke-width="0.12">Range:</text>
<text x="273" y="382" font-family='"Liberation Serif", serif' font-size="9.7" font-weight="normal" fill="#000" text-anchor="start" textLength="19" lengthAdjust="spacingAndGlyphs"  stroke="#000" stroke-width="0.12">S/P:</text>
<rect x="301.8" y="369.7" width="48.3" height="18.1" fill="#fbfbfb" />
<rect x="302.3" y="370.5" width="47" height="16.5" fill="#fff" />
<line x1="302.3" y1="371.4" x2="349.3" y2="371.4" stroke="#7c7c7c" stroke-width="1.7" />
<line x1="303.2" y1="370.5" x2="303.2" y2="387.0" stroke="#7c7c7c" stroke-width="1.7" />
<rect x="335.0" y="372.3" width="13" height="13.9" fill="#f0f0f0" />
<line x1="335.5" y1="372.8" x2="347.5" y2="372.8" stroke="#fff" stroke-width="1" />
<line x1="335.5" y1="372.8" x2="335.5" y2="385.5" stroke="#fff" stroke-width="1" />
<line x1="335.0" y1="386.1" x2="349.3" y2="386.1" stroke="#6e6e6e" stroke-width="1.5" />
<line x1="348.5" y1="371.0" x2="348.5" y2="387.0" stroke="#6e6e6e" stroke-width="1.5" />
<path d="M338.2,376.75 L344.40000000000003,376.75 L341.3,380.35 Z" fill="#000"/>
<text x="305.3" y="382.7" font-family='"Liberation Serif", serif' font-size="9.7" font-weight="normal" fill="#000" text-anchor="start" textLength="15.600000000000001" lengthAdjust="spacingAndGlyphs"  stroke="#000" stroke-width="0.12">SER</text>
<text x="362.4" y="382" font-family='"Liberation Serif", serif' font-size="9.7" font-weight="normal" fill="#000" text-anchor="start" textLength="28.4" lengthAdjust="spacingAndGlyphs"  stroke="#000" stroke-width="0.12">Level:</text>
<rect x="397.9" y="369.7" width="48.3" height="18.1" fill="#fbfbfb" />
<rect x="398.4" y="370.5" width="47" height="16.5" fill="#fff" />
<line x1="398.4" y1="371.4" x2="445.4" y2="371.4" stroke="#7c7c7c" stroke-width="1.7" />
<line x1="399.29999999999995" y1="370.5" x2="399.29999999999995" y2="387.0" stroke="#7c7c7c" stroke-width="1.7" />
<rect x="431.09999999999997" y="372.3" width="13" height="13.9" fill="#f0f0f0" />
<line x1="431.59999999999997" y1="372.8" x2="443.59999999999997" y2="372.8" stroke="#fff" stroke-width="1" />
<line x1="431.59999999999997" y1="372.8" x2="431.59999999999997" y2="385.5" stroke="#fff" stroke-width="1" />
<line x1="431.09999999999997" y1="386.1" x2="445.4" y2="386.1" stroke="#6e6e6e" stroke-width="1.5" />
<line x1="444.59999999999997" y1="371.0" x2="444.59999999999997" y2="387.0" stroke="#6e6e6e" stroke-width="1.5" />
<path d="M434.29999999999995,376.75 L440.5,376.75 L437.4,380.35 Z" fill="#000"/>
<text x="401.4" y="382.7" font-family='"Liberation Serif", serif' font-size="9.7" font-weight="normal" fill="#000" text-anchor="start" textLength="26.0" lengthAdjust="spacingAndGlyphs"  stroke="#000" stroke-width="0.12">600mV</text>
<rect x="301.8" y="395.2" width="48.3" height="17.6" fill="#fbfbfb" />
<rect x="302.3" y="396" width="47" height="16" fill="#fff" />
<line x1="302.3" y1="396.9" x2="349.3" y2="396.9" stroke="#7c7c7c" stroke-width="1.7" />
<line x1="303.2" y1="396" x2="303.2" y2="412" stroke="#7c7c7c" stroke-width="1.7" />
<rect x="335.0" y="397.8" width="13" height="13.4" fill="#f0f0f0" />
<line x1="335.5" y1="398.3" x2="347.5" y2="398.3" stroke="#fff" stroke-width="1" />
<line x1="335.5" y1="398.3" x2="335.5" y2="410.5" stroke="#fff" stroke-width="1" />
<line x1="335.0" y1="411.1" x2="349.3" y2="411.1" stroke="#6e6e6e" stroke-width="1.5" />
<line x1="348.5" y1="396.5" x2="348.5" y2="412" stroke="#6e6e6e" stroke-width="1.5" />
<path d="M338.2,402.0 L344.40000000000003,402.0 L341.3,405.6 Z" fill="#000"/>
<text x="305.3" y="408.2" font-family='"Liberation Serif", serif' font-size="9.7" font-weight="normal" fill="#000" text-anchor="start" textLength="20.8" lengthAdjust="spacingAndGlyphs"  stroke="#000" stroke-width="0.12">Auto</text>
<rect x="497" y="361.5" width="214" height="64.5" rx="2" fill="none" stroke="#fff" stroke-width="1"/>
<rect x="496" y="360.5" width="214" height="64.5" rx="2" fill="none" stroke="#b0b0b0" stroke-width="1"/>
<rect x="500.7" y="356.5" width="41.3" height="8" fill="#f0f0f0" />
<text x="502.7" y="363.8" font-family='"Liberation Serif", serif' font-size="9.7" font-weight="normal" fill="#000" text-anchor="start" textLength="37.3" lengthAdjust="spacingAndGlyphs"  stroke="#000" stroke-width="0.12">Utility</text>
<text x="506" y="380.6" font-family='"Liberation Serif", serif' font-size="9.7" font-weight="normal" fill="#000" text-anchor="start" textLength="44" lengthAdjust="spacingAndGlyphs"  stroke="#000" stroke-width="0.12">Interval:</text>
<rect x="504.5" y="391.9" width="93.0" height="17.6" fill="#fbfbfb" />
<rect x="505" y="392.7" width="91.7" height="16" fill="#fff" />
<line x1="505" y1="393.59999999999997" x2="596.7" y2="393.59999999999997" stroke="#7c7c7c" stroke-width="1.7" />
<line x1="505.9" y1="392.7" x2="505.9" y2="408.7" stroke="#7c7c7c" stroke-width="1.7" />
<rect x="582.4000000000001" y="394.5" width="13" height="13.4" fill="#f0f0f0" />
<line x1="582.9000000000001" y1="395.0" x2="594.9000000000001" y2="395.0" stroke="#fff" stroke-width="1" />
<line x1="582.9000000000001" y1="395.0" x2="582.9000000000001" y2="407.2" stroke="#fff" stroke-width="1" />
<line x1="582.4000000000001" y1="407.8" x2="596.7" y2="407.8" stroke="#6e6e6e" stroke-width="1.5" />
<line x1="595.9000000000001" y1="393.2" x2="595.9000000000001" y2="408.7" stroke="#6e6e6e" stroke-width="1.5" />
<path d="M585.6,398.7 L591.8000000000001,398.7 L588.7,402.3 Z" fill="#000"/>
<text x="508" y="404.9" font-family='"Liberation Serif", serif' font-size="9.7" font-weight="normal" fill="#000" text-anchor="start" textLength="10.4" lengthAdjust="spacingAndGlyphs"  stroke="#000" stroke-width="0.12">2S</text>
<rect x="604" y="375.3" width="42.7" height="37.4" fill="#f0f0f0"/>
<path d="M604.5,412.3V375.8H646.2" fill="none" stroke="#fff" stroke-width="1"/>
<path d="M604.5,412.2H646.2V375.8" fill="none" stroke="#707070" stroke-width="1"/>
<path d="M605.5,411.2H645.2V376.8" fill="none" stroke="#a0a0a0" stroke-width="1"/>
<text x="625.3" y="397" font-family='"Liberation Serif", serif' font-size="9.7" font-weight="normal" fill="#000" text-anchor="middle" textLength="21" lengthAdjust="spacingAndGlyphs"  stroke="#000" stroke-width="0.12">Stop</text>
<rect x="650" y="375.3" width="42.7" height="37.4" fill="#f0f0f0"/>
<path d="M650.5,412.3V375.8H692.2" fill="none" stroke="#fff" stroke-width="1"/>
<path d="M650.5,412.2H692.2V375.8" fill="none" stroke="#707070" stroke-width="1"/>
<path d="M651.5,411.2H691.2V376.8" fill="none" stroke="#a0a0a0" stroke-width="1"/>
<text x="671.3" y="397" font-family='"Liberation Serif", serif' font-size="9.7" font-weight="normal" fill="#000" text-anchor="middle" textLength="21" lengthAdjust="spacingAndGlyphs"  stroke="#000" stroke-width="0.12">Save</text>
<text x="646.7" y="437" font-family='"Liberation Serif", serif' font-size="9.7" font-weight="normal" fill="#000" text-anchor="start" textLength="46" lengthAdjust="spacingAndGlyphs"  stroke="#000" stroke-width="0.12">Connected</text>
</g>
<g transform="translate(0,483)">
<rect x="27" y="0" width="3" height="3" fill="#2a78d8" />
<rect x="720" y="0" width="3" height="3" fill="#2a78d8" />
<path d="M27,449 V4 Q27,0 31,0 H719 Q723,0 723,4 V449 Z" fill="#2b2b2b"/>
<path d="M28,21 V4.5 Q28,1 31.5,1 H718.5 Q722,1 722,4.5 V21 Z" fill="url(#tgrad)"/>
<rect x="28" y="1" width="165" height="20" fill="url(#glow)" />
<line x1="31" y1="1.6" x2="719" y2="1.6" stroke="#dfe9f5" stroke-width="1.2" />
<rect x="28" y="20.6" width="694" height="427.4" fill="#f0f0f0" />
<line x1="28.5" y1="20.6" x2="28.5" y2="448" stroke="#d6e6f6" stroke-width="1" />
<line x1="721.5" y1="4" x2="721.5" y2="448" stroke="#8fd8ea" stroke-width="1" />
<line x1="28" y1="447.5" x2="722" y2="447.5" stroke="#5ad8e8" stroke-width="1" />
<rect x="33.7" y="8.5" width="8.8" height="4.6" rx="0.8" fill="#eef4fb" stroke="#111" stroke-width="1.3"/>
<path d="M31,11 H33.7 M42.5,11 H45" stroke="#111" stroke-width="1.2"/>
<path d="M36.2,13.2 L37.3,11.6 L38.6,13.2 Z" fill="#111"/>
<text x="48.7" y="15.1" font-family='"Liberation Sans", sans-serif' font-size="10.5" font-weight="normal" fill="#141414" text-anchor="start" textLength="82" lengthAdjust="spacingAndGlyphs" stroke="#141414" stroke-width="0.25">HT-LCR Ver 1.0.0</text>
<rect x="693" y="4.5" width="25.5" height="14" rx="2.5" fill="url(#cgrad)" stroke="#6b3a4a" stroke-width="1"/>
<path d="M702.6,9.3 L709,13.5 M709,9.3 L702.6,13.5" stroke="#3e4a5a" stroke-width="3.4" stroke-linecap="round"/>
<path d="M702.6,9.3 L709,13.5 M709,9.3 L702.6,13.5" stroke="#fff" stroke-width="2" stroke-linecap="round"/>
<rect x="37.5" y="28.5" width="447" height="320" fill="#fafafa" />
<rect x="39" y="30.3" width="444" height="316.5" fill="#888888" />
<path d="M39,346.8 V30.3 H483" fill="none" stroke="#a8a8a8" stroke-width="1"/>
<rect x="41" y="32.5" width="440.5" height="313.2" fill="#98b8f8" />
<path d="M44.5,341.5 V36.5 H477" fill="none" stroke="#86a8ee" stroke-width="1"/>
<path d="M45,341.7 H477.7 V37" fill="none" stroke="#b0ceff" stroke-width="1.2"/>
<rect x="45.5" y="37" width="431.7" height="304.6" fill="#000" />
<rect x="62.6" y="49" width="14.6" height="11" fill="#00ffff" />
<text x="83.7" y="58.8" font-family='"Liberation Sans", sans-serif' font-size="14" font-weight="bold" fill="#00ffff" text-anchor="start" textLength="32.8" lengthAdjust="spacingAndGlyphs" >Rs-X</text>
<text x="134" y="58.8" font-family='"Liberation Sans", sans-serif' font-size="14" font-weight="bold" fill="#00ffff" text-anchor="start" textLength="39.7" lengthAdjust="spacingAndGlyphs" >100Hz</text>
<text x="191.3" y="58.8" font-family='"Liberation Sans", sans-serif' font-size="14" font-weight="bold" fill="#00ffff" text-anchor="start" textLength="41" lengthAdjust="spacingAndGlyphs" >100kΩ</text>
<text x="250.4" y="58.8" font-family='"Liberation Sans", sans-serif' font-size="14" font-weight="bold" fill="#00ffff" text-anchor="start" textLength="42.5" lengthAdjust="spacingAndGlyphs" >300mV</text>
<text x="311" y="58.8" font-family='"Liberation Sans", sans-serif' font-size="14" font-weight="bold" fill="#00ffff" text-anchor="start" textLength="28.5" lengthAdjust="spacingAndGlyphs" >Fast</text>
<text x="400" y="58.8" font-family='"Liberation Sans", sans-serif' font-size="14" font-weight="bold" fill="#00e000" text-anchor="start" textLength="26.6" lengthAdjust="spacingAndGlyphs" >Run</text>
<text x="64.6" y="144.8" font-family='"Liberation Sans", sans-serif' font-size="43.5" font-weight="bold" fill="#00ffff" text-anchor="start" textLength="51" lengthAdjust="spacingAndGlyphs" >Rs</text>
<polygon points="340.30,81.50 373.90,81.50 365.40,90.00 348.80,90.00" fill="#00ffff"/>
<polygon points="339.10,82.70 347.60,91.20 347.60,108.75 339.10,116.74" fill="#00ffff"/>
<polygon points="342.67,117.25 346.58,113.00 367.62,113.00 371.53,117.25 367.62,121.50 346.58,121.50" fill="#00ffff"/>
<polygon points="339.10,117.76 347.60,125.75 347.60,143.30 339.10,151.80" fill="#00ffff"/>
<polygon points="340.30,153.00 373.90,153.00 365.40,144.50 348.80,144.50" fill="#00ffff"/>
<text x="384.4" y="153.4" font-family='"Liberation Sans", sans-serif' font-size="44" font-weight="bold" fill="#00ffff" text-anchor="start" textLength="32" lengthAdjust="spacingAndGlyphs" >Ω</text>
<text x="67.4" y="205.8" font-family='"Liberation Sans", sans-serif' font-size="30.5" font-weight="bold" fill="#88f000" text-anchor="start" textLength="17.8" lengthAdjust="spacingAndGlyphs" >X</text>
<polygon points="358.20,172.00 373.90,172.00 370.20,175.70 361.90,175.70" fill="#88f000"/>
<polygon points="357.30,172.90 361.00,176.60 361.00,185.15 357.30,188.63" fill="#88f000"/>
<polygon points="358.85,188.85 360.56,187.00 371.54,187.00 373.25,188.85 371.54,190.70 360.56,190.70" fill="#88f000"/>
<polygon points="357.30,189.07 361.00,192.55 361.00,201.10 357.30,204.80" fill="#88f000"/>
<polygon points="358.20,205.70 373.90,205.70 370.20,202.00 361.90,202.00" fill="#88f000"/>
<text x="383.8" y="205.2" font-family='"Liberation Sans", sans-serif' font-size="20" font-weight="bold" fill="#88f000" text-anchor="start" textLength="16" lengthAdjust="spacingAndGlyphs" >Ω</text>
<text x="422.8" y="211" font-family='"Liberation Sans", sans-serif' font-size="12" font-weight="bold" fill="#00ffff" text-anchor="start" textLength="33.6" lengthAdjust="spacingAndGlyphs" >50MΩ</text>
<text x="422.8" y="226" font-family='"Liberation Sans", sans-serif' font-size="12" font-weight="bold" fill="#88f000" text-anchor="start" textLength="17.6" lengthAdjust="spacingAndGlyphs" >EΩ</text>
<line x1="63.0" y1="214.8" x2="63.0" y2="308.2" stroke="#006a00" stroke-width="1.35" />
<line x1="80.8" y1="214.8" x2="80.8" y2="308.2" stroke="#006a00" stroke-width="1.35" />
<line x1="98.6" y1="214.8" x2="98.6" y2="308.2" stroke="#006a00" stroke-width="1.35" />
<line x1="116.4" y1="214.8" x2="116.4" y2="308.2" stroke="#006a00" stroke-width="1.35" />
<line x1="134.2" y1="214.8" x2="134.2" y2="308.2" stroke="#006a00" stroke-width="1.35" />
<line x1="152.0" y1="214.8" x2="152.0" y2="308.2" stroke="#006a00" stroke-width="1.35" />
<line x1="169.8" y1="214.8" x2="169.8" y2="308.2" stroke="#006a00" stroke-width="1.35" />
<line x1="187.6" y1="214.8" x2="187.6" y2="308.2" stroke="#006a00" stroke-width="1.35" />
<line x1="205.4" y1="214.8" x2="205.4" y2="308.2" stroke="#006a00" stroke-width="1.35" />
<line x1="223.2" y1="214.8" x2="223.2" y2="308.2" stroke="#006a00" stroke-width="1.35" />
<line x1="241.0" y1="214.8" x2="241.0" y2="308.2" stroke="#006a00" stroke-width="1.35" />
<line x1="258.8" y1="214.8" x2="258.8" y2="308.2" stroke="#006a00" stroke-width="1.35" />
<line x1="276.6" y1="214.8" x2="276.6" y2="308.2" stroke="#006a00" stroke-width="1.35" />
<line x1="294.4" y1="214.8" x2="294.4" y2="308.2" stroke="#006a00" stroke-width="1.35" />
<line x1="312.2" y1="214.8" x2="312.2" y2="308.2" stroke="#006a00" stroke-width="1.35" />
<line x1="330.0" y1="214.8" x2="330.0" y2="308.2" stroke="#006a00" stroke-width="1.35" />
<line x1="347.8" y1="214.8" x2="347.8" y2="308.2" stroke="#006a00" stroke-width="1.35" />
<line x1="365.6" y1="214.8" x2="365.6" y2="308.2" stroke="#006a00" stroke-width="1.35" />
<line x1="383.4" y1="214.8" x2="383.4" y2="308.2" stroke="#006a00" stroke-width="1.35" />
<line x1="401.2" y1="214.8" x2="401.2" y2="308.2" stroke="#006a00" stroke-width="1.35" />
<line x1="419.0" y1="214.8" x2="419.0" y2="308.2" stroke="#006a00" stroke-width="1.35" />
<line x1="63" y1="214.8" x2="419" y2="214.8" stroke="#006a00" stroke-width="1.35" />
<line x1="63" y1="226.47500000000002" x2="419" y2="226.47500000000002" stroke="#006a00" stroke-width="1.35" />
<line x1="63" y1="238.15" x2="419" y2="238.15" stroke="#006a00" stroke-width="1.35" />
<line x1="63" y1="249.825" x2="419" y2="249.825" stroke="#006a00" stroke-width="1.35" />
<line x1="63" y1="261.5" x2="419" y2="261.5" stroke="#006a00" stroke-width="1.35" />
<line x1="63" y1="273.175" x2="419" y2="273.175" stroke="#006a00" stroke-width="1.35" />
<line x1="63" y1="284.85" x2="419" y2="284.85" stroke="#006a00" stroke-width="1.35" />
<line x1="63" y1="296.525" x2="419" y2="296.525" stroke="#006a00" stroke-width="1.35" />
<line x1="63" y1="308.2" x2="419" y2="308.2" stroke="#006a00" stroke-width="1.35" />
<line x1="161.5" y1="214.8" x2="161.5" y2="240" stroke="#10d8e8" stroke-width="1.05" />
<line x1="163.4" y1="214.8" x2="163.4" y2="240" stroke="#6a9800" stroke-width="1.05" />
<line x1="165.3" y1="214.8" x2="165.3" y2="240" stroke="#10d8e8" stroke-width="1.05" />
<line x1="170.4" y1="214.8" x2="170.4" y2="240" stroke="#6a9800" stroke-width="1.05" />
<line x1="171.8" y1="214.8" x2="171.8" y2="240" stroke="#1898a8" stroke-width="1.05" />
<line x1="175" y1="214.8" x2="175" y2="240" stroke="#80f000" stroke-width="1.05" />
<line x1="177.4" y1="214.8" x2="177.4" y2="240" stroke="#1898a8" stroke-width="1.05" />
<line x1="179.3" y1="214.8" x2="179.3" y2="240" stroke="#80f000" stroke-width="1.05" />
<line x1="183" y1="214.8" x2="183" y2="240" stroke="#80f000" stroke-width="1.05" />
<line x1="186.7" y1="214.8" x2="186.7" y2="240" stroke="#6a9800" stroke-width="1.05" />
<line x1="188.6" y1="214.8" x2="188.6" y2="240" stroke="#10d8e8" stroke-width="1.05" />
<line x1="194.7" y1="214.8" x2="194.7" y2="240" stroke="#10d8e8" stroke-width="1.05" />
<line x1="196.1" y1="214.8" x2="196.1" y2="240" stroke="#6a9800" stroke-width="1.05" />
<line x1="200.7" y1="214.8" x2="200.7" y2="240" stroke="#80f000" stroke-width="1.05" />
<line x1="204.5" y1="214.8" x2="204.5" y2="240" stroke="#80f000" stroke-width="1.05" />
<line x1="205.9" y1="214.8" x2="205.9" y2="240" stroke="#6a9800" stroke-width="1.05" />
<line x1="209.2" y1="214.8" x2="209.2" y2="240" stroke="#10d8e8" stroke-width="1.05" />
<line x1="211" y1="214.8" x2="211" y2="240" stroke="#6a9800" stroke-width="1.05" />
<line x1="213.4" y1="214.8" x2="213.4" y2="240" stroke="#80f000" stroke-width="1.05" />
<line x1="216.6" y1="214.8" x2="216.6" y2="240" stroke="#80f000" stroke-width="1.05" />
<line x1="219.4" y1="214.8" x2="219.4" y2="240" stroke="#1898a8" stroke-width="1.05" />
<line x1="223.6" y1="214.8" x2="223.6" y2="240" stroke="#80f000" stroke-width="1.05" />
<line x1="228.3" y1="214.8" x2="228.3" y2="240" stroke="#80f000" stroke-width="1.05" />
<line x1="230.1" y1="214.8" x2="230.1" y2="240" stroke="#6a9800" stroke-width="1.05" />
<line x1="232.5" y1="214.8" x2="232.5" y2="240" stroke="#80f000" stroke-width="1.05" />
<line x1="234.3" y1="214.8" x2="234.3" y2="240" stroke="#10d8e8" stroke-width="1.05" />
<line x1="238.5" y1="214.8" x2="238.5" y2="240" stroke="#1898a8" stroke-width="1.05" />
<line x1="240.4" y1="214.8" x2="240.4" y2="240" stroke="#6a9800" stroke-width="1.05" />
<line x1="244.1" y1="214.8" x2="244.1" y2="240" stroke="#80f000" stroke-width="1.05" />
<line x1="247.4" y1="214.8" x2="247.4" y2="240" stroke="#10d8e8" stroke-width="1.05" />
<line x1="252.1" y1="214.8" x2="252.1" y2="240" stroke="#80f000" stroke-width="1.05" />
<line x1="255.8" y1="214.8" x2="255.8" y2="240" stroke="#10d8e8" stroke-width="1.05" />
<line x1="257.7" y1="214.8" x2="257.7" y2="240" stroke="#80f000" stroke-width="1.05" />
<line x1="261.4" y1="214.8" x2="261.4" y2="240" stroke="#6a9800" stroke-width="1.05" />
<line x1="265.1" y1="214.8" x2="265.1" y2="240" stroke="#1898a8" stroke-width="1.05" />
<line x1="268" y1="214.8" x2="268" y2="240" stroke="#80f000" stroke-width="1.05" />
<line x1="271.2" y1="214.8" x2="271.2" y2="240" stroke="#6a9800" stroke-width="1.05" />
<line x1="276.8" y1="214.8" x2="276.8" y2="240" stroke="#6a9800" stroke-width="1.05" />
<line x1="279.2" y1="214.8" x2="279.2" y2="240" stroke="#80f000" stroke-width="1.05" />
<line x1="281" y1="214.8" x2="281" y2="240" stroke="#80f000" stroke-width="1.05" />
<line x1="285.7" y1="214.8" x2="285.7" y2="240" stroke="#80f000" stroke-width="1.05" />
<line x1="289.9" y1="214.8" x2="289.9" y2="240" stroke="#80f000" stroke-width="1.05" />
<line x1="293.6" y1="214.8" x2="293.6" y2="240" stroke="#80f000" stroke-width="1.05" />
<line x1="297.8" y1="214.8" x2="297.8" y2="240" stroke="#6a9800" stroke-width="1.05" />
<line x1="306.2" y1="214.8" x2="306.2" y2="240" stroke="#80f000" stroke-width="1.05" />
<line x1="310.4" y1="214.8" x2="310.4" y2="240" stroke="#80f000" stroke-width="1.05" />
<line x1="314.6" y1="214.8" x2="314.6" y2="240" stroke="#80f000" stroke-width="1.05" />
<line x1="318.3" y1="214.8" x2="318.3" y2="240" stroke="#10d8e8" stroke-width="1.05" />
<line x1="320.2" y1="214.8" x2="320.2" y2="240" stroke="#80f000" stroke-width="1.05" />
<line x1="324.4" y1="214.8" x2="324.4" y2="240" stroke="#10d8e8" stroke-width="1.05" />
<line x1="326.3" y1="214.8" x2="326.3" y2="240" stroke="#6a9800" stroke-width="1.05" />
<line x1="330" y1="214.8" x2="330" y2="240" stroke="#80f000" stroke-width="1.05" />
<line x1="339.8" y1="214.8" x2="339.8" y2="240" stroke="#10d8e8" stroke-width="1.05" />
<line x1="343.6" y1="214.8" x2="343.6" y2="240" stroke="#6a9800" stroke-width="1.05" />
<line x1="347.3" y1="214.8" x2="347.3" y2="240" stroke="#80f000" stroke-width="1.05" />
<line x1="350.6" y1="214.8" x2="350.6" y2="240" stroke="#80f000" stroke-width="1.05" />
<line x1="361.8" y1="214.8" x2="361.8" y2="240" stroke="#80f000" stroke-width="1.05" />
<line x1="364.7" y1="214.8" x2="364.7" y2="240" stroke="#6a9800" stroke-width="1.05" />
<line x1="370.3" y1="214.8" x2="370.3" y2="240" stroke="#10d8e8" stroke-width="1.05" />
<line x1="373.1" y1="214.8" x2="373.1" y2="240" stroke="#80f000" stroke-width="1.05" />
<line x1="377.3" y1="214.8" x2="377.3" y2="240" stroke="#10d8e8" stroke-width="1.05" />
<line x1="381" y1="214.8" x2="381" y2="240" stroke="#80f000" stroke-width="1.05" />
<line x1="385.2" y1="214.8" x2="385.2" y2="240" stroke="#10d8e8" stroke-width="1.05" />
<line x1="388" y1="214.8" x2="388" y2="240" stroke="#6a9800" stroke-width="1.05" />
<line x1="393.6" y1="214.8" x2="393.6" y2="240" stroke="#80f000" stroke-width="1.05" />
<line x1="398.7" y1="214.8" x2="398.7" y2="240" stroke="#6a9800" stroke-width="1.05" />
<line x1="404.8" y1="214.8" x2="404.8" y2="240" stroke="#10d8e8" stroke-width="1.05" />
<line x1="407.6" y1="214.8" x2="407.6" y2="240" stroke="#80f000" stroke-width="1.05" />
<line x1="410.9" y1="214.8" x2="410.9" y2="240" stroke="#80f000" stroke-width="1.05" />
<line x1="415.1" y1="214.8" x2="415.1" y2="240" stroke="#6a9800" stroke-width="1.05" />
<line x1="417.4" y1="214.8" x2="417.4" y2="240" stroke="#10d8e8" stroke-width="1.05" />
<rect x="485" y="31" width="222" height="314" fill="#f0f0f0" />
<rect x="485" y="31" width="222" height="1" fill="#a0a0a0" />
<rect x="485" y="31" width="1" height="314" fill="#a0a0a0" />
<rect x="486" y="32" width="205.6" height="20" fill="#f0f0f0" />
<rect x="519.5" y="52.1" width="172.1" height="292" fill="#fff" />
<line x1="486" y1="52.1" x2="519.5" y2="52.1" stroke="#808080" stroke-width="1.2" />
<line x1="519.5" y1="52.1" x2="691.6" y2="52.1" stroke="#d8d8d8" stroke-width="1" />
<line x1="486" y1="68.975" x2="519.5" y2="68.975" stroke="#808080" stroke-width="1.2" />
<line x1="519.5" y1="68.975" x2="691.6" y2="68.975" stroke="#d8d8d8" stroke-width="1" />
<line x1="486" y1="85.85" x2="519.5" y2="85.85" stroke="#808080" stroke-width="1.2" />
<line x1="519.5" y1="85.85" x2="691.6" y2="85.85" stroke="#d8d8d8" stroke-width="1" />
<line x1="486" y1="102.725" x2="519.5" y2="102.725" stroke="#808080" stroke-width="1.2" />
<line x1="519.5" y1="102.725" x2="691.6" y2="102.725" stroke="#d8d8d8" stroke-width="1" />
<line x1="486" y1="119.6" x2="519.5" y2="119.6" stroke="#808080" stroke-width="1.2" />
<line x1="519.5" y1="119.6" x2="691.6" y2="119.6" stroke="#d8d8d8" stroke-width="1" />
<line x1="486" y1="136.475" x2="519.5" y2="136.475" stroke="#808080" stroke-width="1.2" />
<line x1="519.5" y1="136.475" x2="691.6" y2="136.475" stroke="#d8d8d8" stroke-width="1" />
<line x1="486" y1="153.35" x2="519.5" y2="153.35" stroke="#808080" stroke-width="1.2" />
<line x1="519.5" y1="153.35" x2="691.6" y2="153.35" stroke="#d8d8d8" stroke-width="1" />
<line x1="486" y1="170.225" x2="519.5" y2="170.225" stroke="#808080" stroke-width="1.2" />
<line x1="519.5" y1="170.225" x2="691.6" y2="170.225" stroke="#d8d8d8" stroke-width="1" />
<line x1="486" y1="187.1" x2="519.5" y2="187.1" stroke="#808080" stroke-width="1.2" />
<line x1="519.5" y1="187.1" x2="691.6" y2="187.1" stroke="#d8d8d8" stroke-width="1" />
<line x1="486" y1="203.975" x2="519.5" y2="203.975" stroke="#808080" stroke-width="1.2" />
<line x1="519.5" y1="203.975" x2="691.6" y2="203.975" stroke="#d8d8d8" stroke-width="1" />
<line x1="486" y1="220.85" x2="519.5" y2="220.85" stroke="#808080" stroke-width="1.2" />
<line x1="519.5" y1="220.85" x2="691.6" y2="220.85" stroke="#d8d8d8" stroke-width="1" />
<line x1="486" y1="237.725" x2="519.5" y2="237.725" stroke="#808080" stroke-width="1.2" />
<line x1="519.5" y1="237.725" x2="691.6" y2="237.725" stroke="#d8d8d8" stroke-width="1" />
<line x1="486" y1="254.6" x2="519.5" y2="254.6" stroke="#808080" stroke-width="1.2" />
<line x1="519.5" y1="254.6" x2="691.6" y2="254.6" stroke="#d8d8d8" stroke-width="1" />
<line x1="486" y1="271.475" x2="519.5" y2="271.475" stroke="#808080" stroke-width="1.2" />
<line x1="519.5" y1="271.475" x2="691.6" y2="271.475" stroke="#d8d8d8" stroke-width="1" />
<line x1="486" y1="288.35" x2="519.5" y2="288.35" stroke="#808080" stroke-width="1.2" />
<line x1="519.5" y1="288.35" x2="691.6" y2="288.35" stroke="#d8d8d8" stroke-width="1" />
<line x1="486" y1="305.225" x2="519.5" y2="305.225" stroke="#808080" stroke-width="1.2" />
<line x1="519.5" y1="305.225" x2="691.6" y2="305.225" stroke="#d8d8d8" stroke-width="1" />
<line x1="486" y1="322.1" x2="519.5" y2="322.1" stroke="#808080" stroke-width="1.2" />
<line x1="519.5" y1="322.1" x2="691.6" y2="322.1" stroke="#d8d8d8" stroke-width="1" />
<line x1="486" y1="338.975" x2="519.5" y2="338.975" stroke="#808080" stroke-width="1.2" />
<line x1="519.5" y1="338.975" x2="691.6" y2="338.975" stroke="#d8d8d8" stroke-width="1" />
<line x1="519.5" y1="32" x2="519.5" y2="52.1" stroke="#a0a0a0" stroke-width="1.2" />
<line x1="579" y1="32" x2="579" y2="52.1" stroke="#a0a0a0" stroke-width="1.2" />
<line x1="638.4" y1="32" x2="638.4" y2="52.1" stroke="#a0a0a0" stroke-width="1.2" />
<line x1="691.6" y1="32" x2="691.6" y2="52.1" stroke="#a0a0a0" stroke-width="1.2" />
<path d="M487.2,51 V32.8 H518.7" fill="none" stroke="#fff" stroke-width="1"/>
<path d="M520.7,51 V32.8 H578.2" fill="none" stroke="#fff" stroke-width="1"/>
<path d="M580.2,51 V32.8 H637.6" fill="none" stroke="#fff" stroke-width="1"/>
<path d="M639.6,51 V32.8 H690.8000000000001" fill="none" stroke="#fff" stroke-width="1"/>
<line x1="486" y1="52.1" x2="691.6" y2="52.1" stroke="#8a8a8a" stroke-width="1.3" />
<line x1="519.5" y1="52" x2="519.5" y2="345" stroke="#808080" stroke-width="1.2" />
<line x1="579" y1="52" x2="579" y2="345" stroke="#d8d8d8" stroke-width="1" />
<line x1="638.4" y1="52" x2="638.4" y2="345" stroke="#d8d8d8" stroke-width="1" />
<line x1="691.6" y1="52" x2="691.6" y2="345" stroke="#d8d8d8" stroke-width="1" />
<text x="503" y="48.2" font-family='"Liberation Sans", sans-serif' font-size="11" font-weight="normal" fill="#0a0a0a" text-anchor="middle" textLength="27.2" lengthAdjust="spacingAndGlyphs" >Index</text>
<text x="550" y="48.2" font-family='"Liberation Sans", sans-serif' font-size="11" font-weight="normal" fill="#0a0a0a" text-anchor="middle" textLength="23" lengthAdjust="spacingAndGlyphs" >Time</text>
<text x="609.4" y="48.2" font-family='"Liberation Sans", sans-serif' font-size="11" font-weight="normal" fill="#0a0a0a" text-anchor="middle" textLength="24" lengthAdjust="spacingAndGlyphs" >Main</text>
<text x="665.7" y="48.2" font-family='"Liberation Sans", sans-serif' font-size="11" font-weight="normal" fill="#0a0a0a" text-anchor="middle" textLength="25.4" lengthAdjust="spacingAndGlyphs" >Slave</text>
<text x="503" y="66.1" font-family='"Liberation Sans", sans-serif' font-size="11" font-weight="normal" fill="#0a0a0a" text-anchor="middle" >1</text>
<text x="576.6" y="66.1" font-family='"Liberation Sans", sans-serif' font-size="11" font-weight="normal" fill="#0a0a0a" text-anchor="end" textLength="40" lengthAdjust="spacingAndGlyphs" >11:43:58</text>
<text x="636.8" y="66.1" font-family='"Liberation Sans", sans-serif' font-size="11" font-weight="normal" fill="#0a0a0a" text-anchor="end" textLength="15.5" lengthAdjust="spacingAndGlyphs" >EΩ</text>
<text x="689.6" y="66.1" font-family='"Liberation Sans", sans-serif' font-size="11" font-weight="normal" fill="#0a0a0a" text-anchor="end" textLength="15.5" lengthAdjust="spacingAndGlyphs" >EΩ</text>
<text x="503" y="82.975" font-family='"Liberation Sans", sans-serif' font-size="11" font-weight="normal" fill="#0a0a0a" text-anchor="middle" >2</text>
<text x="576.6" y="82.975" font-family='"Liberation Sans", sans-serif' font-size="11" font-weight="normal" fill="#0a0a0a" text-anchor="end" textLength="40" lengthAdjust="spacingAndGlyphs" >11:43:56</text>
<text x="636.8" y="82.975" font-family='"Liberation Sans", sans-serif' font-size="11" font-weight="normal" fill="#0a0a0a" text-anchor="end" textLength="15.5" lengthAdjust="spacingAndGlyphs" >EΩ</text>
<text x="689.6" y="82.975" font-family='"Liberation Sans", sans-serif' font-size="11" font-weight="normal" fill="#0a0a0a" text-anchor="end" textLength="15.5" lengthAdjust="spacingAndGlyphs" >EΩ</text>
<text x="503" y="99.85" font-family='"Liberation Sans", sans-serif' font-size="11" font-weight="normal" fill="#0a0a0a" text-anchor="middle" >3</text>
<text x="576.6" y="99.85" font-family='"Liberation Sans", sans-serif' font-size="11" font-weight="normal" fill="#0a0a0a" text-anchor="end" textLength="40" lengthAdjust="spacingAndGlyphs" >11:43:54</text>
<text x="636.8" y="99.85" font-family='"Liberation Sans", sans-serif' font-size="11" font-weight="normal" fill="#0a0a0a" text-anchor="end" textLength="15.5" lengthAdjust="spacingAndGlyphs" >EΩ</text>
<text x="689.6" y="99.85" font-family='"Liberation Sans", sans-serif' font-size="11" font-weight="normal" fill="#0a0a0a" text-anchor="end" textLength="15.5" lengthAdjust="spacingAndGlyphs" >EΩ</text>
<text x="503" y="116.725" font-family='"Liberation Sans", sans-serif' font-size="11" font-weight="normal" fill="#0a0a0a" text-anchor="middle" >4</text>
<text x="576.6" y="116.725" font-family='"Liberation Sans", sans-serif' font-size="11" font-weight="normal" fill="#0a0a0a" text-anchor="end" textLength="40" lengthAdjust="spacingAndGlyphs" >11:43:52</text>
<text x="636.8" y="116.725" font-family='"Liberation Sans", sans-serif' font-size="11" font-weight="normal" fill="#0a0a0a" text-anchor="end" textLength="15.5" lengthAdjust="spacingAndGlyphs" >EΩ</text>
<text x="689.6" y="116.725" font-family='"Liberation Sans", sans-serif' font-size="11" font-weight="normal" fill="#0a0a0a" text-anchor="end" textLength="15.5" lengthAdjust="spacingAndGlyphs" >EΩ</text>
<text x="503" y="133.6" font-family='"Liberation Sans", sans-serif' font-size="11" font-weight="normal" fill="#0a0a0a" text-anchor="middle" >5</text>
<text x="576.6" y="133.6" font-family='"Liberation Sans", sans-serif' font-size="11" font-weight="normal" fill="#0a0a0a" text-anchor="end" textLength="40" lengthAdjust="spacingAndGlyphs" >11:43:49</text>
<text x="636.8" y="133.6" font-family='"Liberation Sans", sans-serif' font-size="11" font-weight="normal" fill="#0a0a0a" text-anchor="end" textLength="15.5" lengthAdjust="spacingAndGlyphs" >EΩ</text>
<text x="689.6" y="133.6" font-family='"Liberation Sans", sans-serif' font-size="11" font-weight="normal" fill="#0a0a0a" text-anchor="end" textLength="15.5" lengthAdjust="spacingAndGlyphs" >EΩ</text>
<text x="503" y="150.475" font-family='"Liberation Sans", sans-serif' font-size="11" font-weight="normal" fill="#0a0a0a" text-anchor="middle" >6</text>
<text x="576.6" y="150.475" font-family='"Liberation Sans", sans-serif' font-size="11" font-weight="normal" fill="#0a0a0a" text-anchor="end" textLength="40" lengthAdjust="spacingAndGlyphs" >11:43:47</text>
<text x="636.8" y="150.475" font-family='"Liberation Sans", sans-serif' font-size="11" font-weight="normal" fill="#0a0a0a" text-anchor="end" textLength="15.5" lengthAdjust="spacingAndGlyphs" >EΩ</text>
<text x="689.6" y="150.475" font-family='"Liberation Sans", sans-serif' font-size="11" font-weight="normal" fill="#0a0a0a" text-anchor="end" textLength="15.5" lengthAdjust="spacingAndGlyphs" >EΩ</text>
<text x="503" y="167.35" font-family='"Liberation Sans", sans-serif' font-size="11" font-weight="normal" fill="#0a0a0a" text-anchor="middle" >7</text>
<text x="576.6" y="167.35" font-family='"Liberation Sans", sans-serif' font-size="11" font-weight="normal" fill="#0a0a0a" text-anchor="end" textLength="40" lengthAdjust="spacingAndGlyphs" >11:43:45</text>
<text x="636.8" y="167.35" font-family='"Liberation Sans", sans-serif' font-size="11" font-weight="normal" fill="#0a0a0a" text-anchor="end" textLength="15.5" lengthAdjust="spacingAndGlyphs" >EΩ</text>
<text x="689.6" y="167.35" font-family='"Liberation Sans", sans-serif' font-size="11" font-weight="normal" fill="#0a0a0a" text-anchor="end" textLength="15.5" lengthAdjust="spacingAndGlyphs" >EΩ</text>
<text x="503" y="184.225" font-family='"Liberation Sans", sans-serif' font-size="11" font-weight="normal" fill="#0a0a0a" text-anchor="middle" >8</text>
<text x="576.6" y="184.225" font-family='"Liberation Sans", sans-serif' font-size="11" font-weight="normal" fill="#0a0a0a" text-anchor="end" textLength="40" lengthAdjust="spacingAndGlyphs" >11:43:43</text>
<text x="636.8" y="184.225" font-family='"Liberation Sans", sans-serif' font-size="11" font-weight="normal" fill="#0a0a0a" text-anchor="end" textLength="15.5" lengthAdjust="spacingAndGlyphs" >EΩ</text>
<text x="689.6" y="184.225" font-family='"Liberation Sans", sans-serif' font-size="11" font-weight="normal" fill="#0a0a0a" text-anchor="end" textLength="15.5" lengthAdjust="spacingAndGlyphs" >EΩ</text>
<text x="503" y="201.1" font-family='"Liberation Sans", sans-serif' font-size="11" font-weight="normal" fill="#0a0a0a" text-anchor="middle" >9</text>
<text x="576.6" y="201.1" font-family='"Liberation Sans", sans-serif' font-size="11" font-weight="normal" fill="#0a0a0a" text-anchor="end" textLength="40" lengthAdjust="spacingAndGlyphs" >11:43:41</text>
<text x="636.8" y="201.1" font-family='"Liberation Sans", sans-serif' font-size="11" font-weight="normal" fill="#0a0a0a" text-anchor="end" textLength="15.5" lengthAdjust="spacingAndGlyphs" >EΩ</text>
<text x="689.6" y="201.1" font-family='"Liberation Sans", sans-serif' font-size="11" font-weight="normal" fill="#0a0a0a" text-anchor="end" textLength="15.5" lengthAdjust="spacingAndGlyphs" >EΩ</text>
<text x="503" y="217.975" font-family='"Liberation Sans", sans-serif' font-size="11" font-weight="normal" fill="#0a0a0a" text-anchor="middle" >10</text>
<text x="576.6" y="217.975" font-family='"Liberation Sans", sans-serif' font-size="11" font-weight="normal" fill="#0a0a0a" text-anchor="end" textLength="40" lengthAdjust="spacingAndGlyphs" >11:43:39</text>
<text x="636.8" y="217.975" font-family='"Liberation Sans", sans-serif' font-size="11" font-weight="normal" fill="#0a0a0a" text-anchor="end" textLength="15.5" lengthAdjust="spacingAndGlyphs" >EΩ</text>
<text x="689.6" y="217.975" font-family='"Liberation Sans", sans-serif' font-size="11" font-weight="normal" fill="#0a0a0a" text-anchor="end" textLength="15.5" lengthAdjust="spacingAndGlyphs" >EΩ</text>
<text x="503" y="234.85" font-family='"Liberation Sans", sans-serif' font-size="11" font-weight="normal" fill="#0a0a0a" text-anchor="middle" >11</text>
<text x="576.6" y="234.85" font-family='"Liberation Sans", sans-serif' font-size="11" font-weight="normal" fill="#0a0a0a" text-anchor="end" textLength="40" lengthAdjust="spacingAndGlyphs" >11:43:37</text>
<text x="636.8" y="234.85" font-family='"Liberation Sans", sans-serif' font-size="11" font-weight="normal" fill="#0a0a0a" text-anchor="end" textLength="15.5" lengthAdjust="spacingAndGlyphs" >EΩ</text>
<text x="689.6" y="234.85" font-family='"Liberation Sans", sans-serif' font-size="11" font-weight="normal" fill="#0a0a0a" text-anchor="end" textLength="15.5" lengthAdjust="spacingAndGlyphs" >EΩ</text>
<text x="503" y="251.725" font-family='"Liberation Sans", sans-serif' font-size="11" font-weight="normal" fill="#0a0a0a" text-anchor="middle" >12</text>
<text x="576.6" y="251.725" font-family='"Liberation Sans", sans-serif' font-size="11" font-weight="normal" fill="#0a0a0a" text-anchor="end" textLength="40" lengthAdjust="spacingAndGlyphs" >11:43:35</text>
<text x="636.8" y="251.725" font-family='"Liberation Sans", sans-serif' font-size="11" font-weight="normal" fill="#0a0a0a" text-anchor="end" textLength="15.5" lengthAdjust="spacingAndGlyphs" >EΩ</text>
<text x="689.6" y="251.725" font-family='"Liberation Sans", sans-serif' font-size="11" font-weight="normal" fill="#0a0a0a" text-anchor="end" textLength="15.5" lengthAdjust="spacingAndGlyphs" >EΩ</text>
<text x="503" y="268.6" font-family='"Liberation Sans", sans-serif' font-size="11" font-weight="normal" fill="#0a0a0a" text-anchor="middle" >13</text>
<text x="576.6" y="268.6" font-family='"Liberation Sans", sans-serif' font-size="11" font-weight="normal" fill="#0a0a0a" text-anchor="end" textLength="40" lengthAdjust="spacingAndGlyphs" >11:43:33</text>
<text x="636.8" y="268.6" font-family='"Liberation Sans", sans-serif' font-size="11" font-weight="normal" fill="#0a0a0a" text-anchor="end" textLength="15.5" lengthAdjust="spacingAndGlyphs" >EΩ</text>
<text x="689.6" y="268.6" font-family='"Liberation Sans", sans-serif' font-size="11" font-weight="normal" fill="#0a0a0a" text-anchor="end" textLength="15.5" lengthAdjust="spacingAndGlyphs" >EΩ</text>
<text x="503" y="285.475" font-family='"Liberation Sans", sans-serif' font-size="11" font-weight="normal" fill="#0a0a0a" text-anchor="middle" >14</text>
<text x="576.6" y="285.475" font-family='"Liberation Sans", sans-serif' font-size="11" font-weight="normal" fill="#0a0a0a" text-anchor="end" textLength="40" lengthAdjust="spacingAndGlyphs" >11:43:31</text>
<text x="636.8" y="285.475" font-family='"Liberation Sans", sans-serif' font-size="11" font-weight="normal" fill="#0a0a0a" text-anchor="end" textLength="15.5" lengthAdjust="spacingAndGlyphs" >EΩ</text>
<text x="689.6" y="285.475" font-family='"Liberation Sans", sans-serif' font-size="11" font-weight="normal" fill="#0a0a0a" text-anchor="end" textLength="15.5" lengthAdjust="spacingAndGlyphs" >EΩ</text>
<text x="503" y="302.35" font-family='"Liberation Sans", sans-serif' font-size="11" font-weight="normal" fill="#0a0a0a" text-anchor="middle" >15</text>
<text x="576.6" y="302.35" font-family='"Liberation Sans", sans-serif' font-size="11" font-weight="normal" fill="#0a0a0a" text-anchor="end" textLength="40" lengthAdjust="spacingAndGlyphs" >11:43:29</text>
<text x="636.8" y="302.35" font-family='"Liberation Sans", sans-serif' font-size="11" font-weight="normal" fill="#0a0a0a" text-anchor="end" textLength="15.5" lengthAdjust="spacingAndGlyphs" >EΩ</text>
<text x="689.6" y="302.35" font-family='"Liberation Sans", sans-serif' font-size="11" font-weight="normal" fill="#0a0a0a" text-anchor="end" textLength="15.5" lengthAdjust="spacingAndGlyphs" >EΩ</text>
<text x="503" y="319.225" font-family='"Liberation Sans", sans-serif' font-size="11" font-weight="normal" fill="#0a0a0a" text-anchor="middle" >16</text>
<text x="576.6" y="319.225" font-family='"Liberation Sans", sans-serif' font-size="11" font-weight="normal" fill="#0a0a0a" text-anchor="end" textLength="40" lengthAdjust="spacingAndGlyphs" >11:43:27</text>
<text x="636.8" y="319.225" font-family='"Liberation Sans", sans-serif' font-size="11" font-weight="normal" fill="#0a0a0a" text-anchor="end" textLength="15.5" lengthAdjust="spacingAndGlyphs" >EΩ</text>
<text x="689.6" y="319.225" font-family='"Liberation Sans", sans-serif' font-size="11" font-weight="normal" fill="#0a0a0a" text-anchor="end" textLength="15.5" lengthAdjust="spacingAndGlyphs" >EΩ</text>
<text x="503" y="336.1" font-family='"Liberation Sans", sans-serif' font-size="11" font-weight="normal" fill="#0a0a0a" text-anchor="middle" >17</text>
<text x="576.6" y="336.1" font-family='"Liberation Sans", sans-serif' font-size="11" font-weight="normal" fill="#0a0a0a" text-anchor="end" textLength="40" lengthAdjust="spacingAndGlyphs" >11:43:25</text>
<text x="636.8" y="336.1" font-family='"Liberation Sans", sans-serif' font-size="11" font-weight="normal" fill="#0a0a0a" text-anchor="end" textLength="15.5" lengthAdjust="spacingAndGlyphs" >EΩ</text>
<text x="689.6" y="336.1" font-family='"Liberation Sans", sans-serif' font-size="11" font-weight="normal" fill="#0a0a0a" text-anchor="end" textLength="15.5" lengthAdjust="spacingAndGlyphs" >EΩ</text>
<rect x="692" y="32" width="14.5" height="313" fill="#eaeaea" />
<path d="M697.3,41.3 L699.8,38.8 L702.3,41.3" fill="none" stroke="#222" stroke-width="1.4"/>
<rect x="693.6" y="47.8" width="12" height="22.7" rx="2" fill="url(#thgrad)" stroke="#b8b8b8" stroke-width="0.8"/>
<line x1="696.5" y1="56.35" x2="702.5" y2="56.35" stroke="#606060" stroke-width="0.8" />
<line x1="696.5" y1="58.35" x2="702.5" y2="58.35" stroke="#606060" stroke-width="0.8" />
<line x1="696.5" y1="60.35" x2="702.5" y2="60.35" stroke="#606060" stroke-width="0.8" />
<path d="M697.5,336.2 L699.8,338.6 L702.1,336.2 Z" fill="#222"/>
</g>
</svg></body></html>
